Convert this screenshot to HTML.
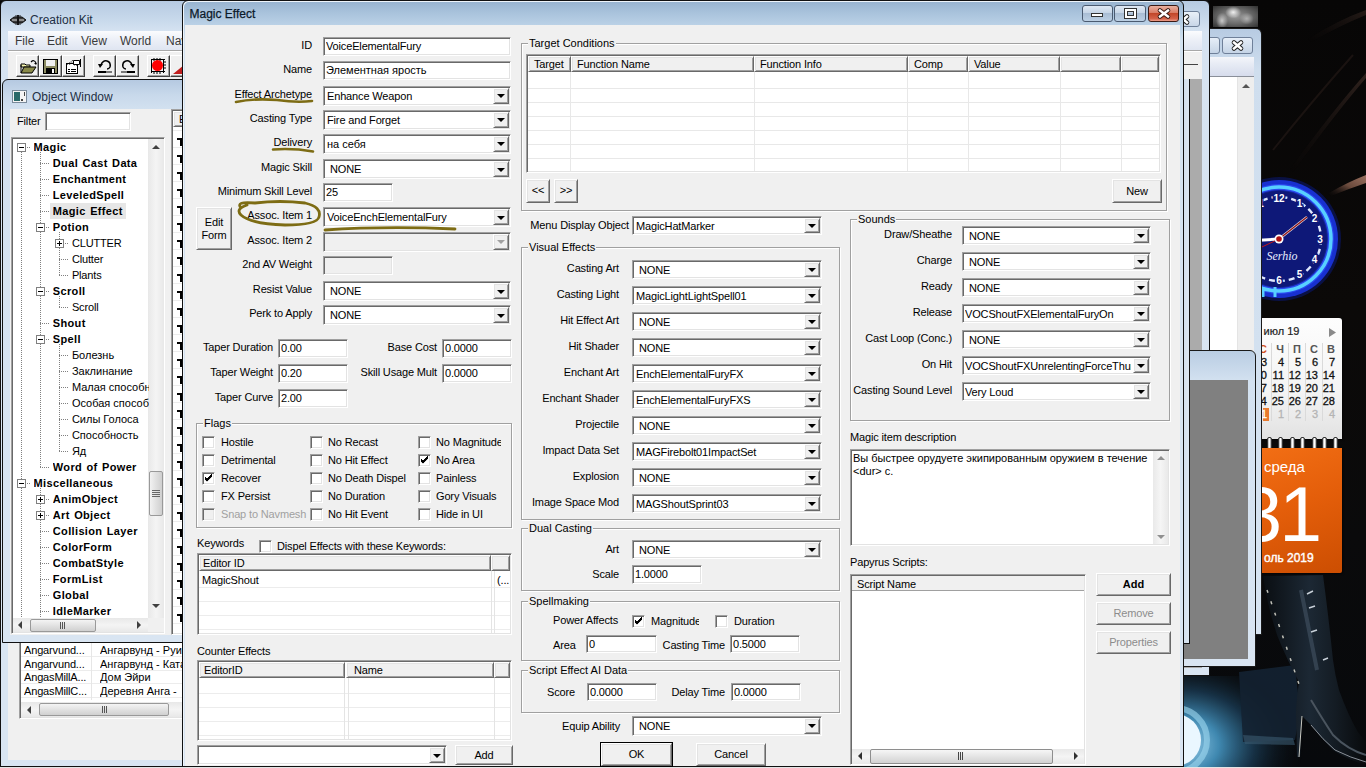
<!DOCTYPE html><html><head><meta charset="utf-8"><style>
html,body{margin:0;padding:0;}
body{width:1366px;height:768px;overflow:hidden;position:relative;background:#060606;font-family:'Liberation Sans',sans-serif;font-size:11px;color:#000;}
body div, body svg{position:absolute;}
</style></head><body>
<div style="left:1183px;top:0px;width:183px;height:768px;background:linear-gradient(180deg,#070606 0%,#0b0908 40%,#0a0a0b 70%,#07090c 100%);"></div>
<svg style="left:1183px;top:0px;filter:blur(0.7px)" width="183" height="768"><defs><radialGradient id="ice" cx="0.5" cy="0.5" r="0.5"><stop offset="0" stop-color="#f2fbff"/><stop offset="0.45" stop-color="#d8f0fb"/><stop offset="0.6" stop-color="#6ab4d8"/><stop offset="0.8" stop-color="#2a6a90" stop-opacity="0.7"/><stop offset="1" stop-color="#12324a" stop-opacity="0"/></radialGradient><linearGradient id="hair" x1="0" y1="1" x2="1" y2="0"><stop offset="0" stop-color="#1a1210" stop-opacity="0"/><stop offset="0.5" stop-color="#6a4a3c"/><stop offset="1" stop-color="#9a7060"/></linearGradient><linearGradient id="hair2" x1="0" y1="1" x2="1" y2="0"><stop offset="0" stop-color="#1a1210" stop-opacity="0"/><stop offset="1" stop-color="#3a2a24"/></linearGradient><linearGradient id="leather" x1="0" y1="0" x2="1" y2="0"><stop offset="0" stop-color="#0a0e12"/><stop offset="0.45" stop-color="#1c2834"/><stop offset="0.7" stop-color="#141c24"/><stop offset="1" stop-color="#080a0c"/></linearGradient></defs><path d="M146 193 Q165 182 183 175 L183 183 Q165 189 148 196 Z" fill="url(#hair)"/><path d="M107 169 Q150 110 183 73 L183 78 Q152 114 110 172 Z" fill="url(#hair2)" opacity="0.8"/><path d="M125 39 Q155 20 183 10 L183 15 Q156 26 128 42 Z" fill="url(#hair2)" opacity="0.6"/><path d="M90 150 Q130 100 170 55" stroke="#221815" stroke-width="2" fill="none" opacity="0.7"/><radialGradient id="haze" cx="0" cy="0.75" r="1"><stop offset="0" stop-color="#9fd4f0"/><stop offset="0.3" stop-color="#3f88b0"/><stop offset="0.6" stop-color="#1a3a52" stop-opacity="0.8"/><stop offset="1" stop-color="#0a0d10" stop-opacity="0"/></radialGradient><rect x="0" y="676" width="120" height="92" fill="url(#haze)"/><path d="M56 672 L112 665 L117 712 L112 740 L60 742 Z" fill="#142232" opacity="0.9"/><path d="M60 735 L110 738 L112 745 L62 744 Z" fill="#3a5a70" opacity="0.6"/><circle cx="-8" cy="740" r="26" fill="#eaf7ff"/><circle cx="-8" cy="740" r="32" fill="none" stroke="#9fd8f0" stroke-width="6" opacity="0.6"/><path d="M80 576 L140 575 Q146 620 150 660 Q152 675 156 690 Q165 715 175 732 L183 742 L183 765 Q165 760 150 750 Q138 738 128 725 L119 716 L117 757 L114 757 L113 712 Q114 695 116 682 Q104 660 94 635 Q84 605 80 576Z" fill="url(#leather)"/><path d="M118 590 Q126 630 134 670" stroke="#3a4858" stroke-width="4" fill="none" opacity="0.8"/><path d="M124 594 L130 591 M126 608 L132 606 M128 632 L134 630 M140 660 L145 658" stroke="#c8d0d8" stroke-width="1.5"/><path d="M84 590 L118 690" stroke="#c0c0b8" stroke-width="1.5" stroke-dasharray="3 9" fill="none"/><path d="M128 700 Q140 720 150 735 Q165 750 183 755" stroke="#4a545e" stroke-width="2" fill="none"/><path d="M119 716 L116 757" stroke="#c8c8c0" stroke-width="1" fill="none"/><path d="M128 725 Q140 740 152 750 Q168 758 183 762" stroke="#8a9098" stroke-width="1" fill="none"/></svg>
<div style="left:1213px;top:6px;width:45px;height:21px;background:radial-gradient(ellipse 8px 6px at 45% 30%,#f0f0f0,transparent),radial-gradient(ellipse 6px 8px at 20% 70%,#c8c8c8,transparent),radial-gradient(ellipse 7px 6px at 75% 60%,#b0b0b0,transparent),radial-gradient(ellipse at 50% 50%,#9a9a9a 0%,#6a6a6a 50%,#303030 100%);"></div>
<svg style="left:1215px;top:175px" width="128" height="128" viewBox="-64 -64 128 128"><circle r="62" fill="#0a1a80" opacity="0.5"/><circle r="59" fill="#1830d0"/><circle r="55" fill="#2a48f0"/><circle r="52" fill="none" stroke="#58d0ff" stroke-width="3.5"/><circle r="49" fill="#14249a"/><circle r="48" fill="#0e1878"/><circle r="42" fill="none" stroke="#dfe8ff" stroke-width="2.4" stroke-dasharray="6 4"/><g fill="#fff" stroke="#0e1878" stroke-width="3" paint-order="stroke" font-size="10" font-weight="bold" text-anchor="middle" font-family="Liberation Sans"><text x="20.5" y="-32.0">1</text><text x="35.5" y="-17.0">2</text><text x="41.0" y="3.5">3</text><text x="35.5" y="24.0">4</text><text x="20.5" y="39.0">5</text><text x="0.0" y="44.5">6</text><text x="-20.5" y="39.0">7</text><text x="-35.5" y="24.0">8</text><text x="-41.0" y="3.5">9</text><text x="-35.5" y="-17.0">10</text><text x="-20.5" y="-32.0">11</text><text x="-0.0" y="-37.5">12</text></g><text x="3" y="21" fill="#e8eeff" font-size="12" font-style="italic" font-family="Liberation Serif" text-anchor="middle">Serhio</text><line x1="0" y1="0" x2="28" y2="-22" stroke="#e0e0e8" stroke-width="2.5"/><line x1="0" y1="0" x2="28" y2="-22" stroke="#901010" stroke-width="1.2"/><line x1="0" y1="0" x2="-32" y2="2" stroke="#ffffff" stroke-width="3"/><line x1="0" y1="0" x2="-30" y2="14" stroke="#c01818" stroke-width="1"/><circle r="4.5" fill="#fff"/><circle r="2.8" fill="#b01010"/><path d="M-16 48 V58 M-4 48 V58" stroke="#58d0ff" stroke-width="3"/></svg>
<div style="left:1262px;top:318px;width:80px;height:121px;background:linear-gradient(180deg,#fdfdfd 0%,#f4f4f4 60%,#e2e2e2 100%);border-radius:0 3px 0 0;box-shadow:1px 1px 2px rgba(0,0,0,.6);"></div>
<div style="top:325px;font-size:11px;line-height:13px;color:#222;white-space:nowrap;left:1263.5px;-webkit-text-stroke:0.2px #222;">июл 19</div>
<svg style="left:1329px;top:328px" width="7" height="9"><path d="M0 0 L7 4.5 L0 9Z" fill="#8a8a8a"/></svg>
<div style="left:1263px;top:408px;width:6px;height:13px;background:#e87a30;"></div>
<div style="left:1271px;top:343px;width:1px;height:78px;background:#dadada;"></div>
<div style="left:1288px;top:343px;width:1px;height:78px;background:#dadada;"></div>
<div style="left:1305px;top:343px;width:1px;height:78px;background:#dadada;"></div>
<div style="left:1322px;top:343px;width:1px;height:78px;background:#dadada;"></div>
<div style="left:1237px;top:343px;width:30px;text-align:right;font-size:11px;line-height:13px;color:#d05020;font-weight:bold;-webkit-text-stroke:0;white-space:nowrap;">С</div>
<div style="left:1254px;top:343px;width:30px;text-align:right;font-size:11px;line-height:13px;color:#555;font-weight:bold;-webkit-text-stroke:0;white-space:nowrap;">Ч</div>
<div style="left:1271px;top:343px;width:30px;text-align:right;font-size:11px;line-height:13px;color:#555;font-weight:bold;-webkit-text-stroke:0;white-space:nowrap;">П</div>
<div style="left:1288px;top:343px;width:30px;text-align:right;font-size:11px;line-height:13px;color:#555;font-weight:bold;-webkit-text-stroke:0;white-space:nowrap;">С</div>
<div style="left:1305px;top:343px;width:30px;text-align:right;font-size:11px;line-height:13px;color:#555;font-weight:bold;-webkit-text-stroke:0;white-space:nowrap;">В</div>
<div style="left:1237px;top:356px;width:30px;text-align:right;font-size:11px;line-height:13px;color:#111;font-weight:normal;-webkit-text-stroke:0.3px #111;white-space:nowrap;">3</div>
<div style="left:1254px;top:356px;width:30px;text-align:right;font-size:11px;line-height:13px;color:#111;font-weight:normal;-webkit-text-stroke:0.3px #111;white-space:nowrap;">4</div>
<div style="left:1271px;top:356px;width:30px;text-align:right;font-size:11px;line-height:13px;color:#111;font-weight:normal;-webkit-text-stroke:0.3px #111;white-space:nowrap;">5</div>
<div style="left:1288px;top:356px;width:30px;text-align:right;font-size:11px;line-height:13px;color:#111;font-weight:normal;-webkit-text-stroke:0.3px #111;white-space:nowrap;">6</div>
<div style="left:1305px;top:356px;width:30px;text-align:right;font-size:11px;line-height:13px;color:#111;font-weight:normal;-webkit-text-stroke:0.3px #111;white-space:nowrap;">7</div>
<div style="left:1237px;top:369px;width:30px;text-align:right;font-size:11px;line-height:13px;color:#111;font-weight:normal;-webkit-text-stroke:0.3px #111;white-space:nowrap;">10</div>
<div style="left:1254px;top:369px;width:30px;text-align:right;font-size:11px;line-height:13px;color:#111;font-weight:normal;-webkit-text-stroke:0.3px #111;white-space:nowrap;">11</div>
<div style="left:1271px;top:369px;width:30px;text-align:right;font-size:11px;line-height:13px;color:#111;font-weight:normal;-webkit-text-stroke:0.3px #111;white-space:nowrap;">12</div>
<div style="left:1288px;top:369px;width:30px;text-align:right;font-size:11px;line-height:13px;color:#111;font-weight:normal;-webkit-text-stroke:0.3px #111;white-space:nowrap;">13</div>
<div style="left:1305px;top:369px;width:30px;text-align:right;font-size:11px;line-height:13px;color:#111;font-weight:normal;-webkit-text-stroke:0.3px #111;white-space:nowrap;">14</div>
<div style="left:1237px;top:382px;width:30px;text-align:right;font-size:11px;line-height:13px;color:#111;font-weight:normal;-webkit-text-stroke:0.3px #111;white-space:nowrap;">17</div>
<div style="left:1254px;top:382px;width:30px;text-align:right;font-size:11px;line-height:13px;color:#111;font-weight:normal;-webkit-text-stroke:0.3px #111;white-space:nowrap;">18</div>
<div style="left:1271px;top:382px;width:30px;text-align:right;font-size:11px;line-height:13px;color:#111;font-weight:normal;-webkit-text-stroke:0.3px #111;white-space:nowrap;">19</div>
<div style="left:1288px;top:382px;width:30px;text-align:right;font-size:11px;line-height:13px;color:#111;font-weight:normal;-webkit-text-stroke:0.3px #111;white-space:nowrap;">20</div>
<div style="left:1305px;top:382px;width:30px;text-align:right;font-size:11px;line-height:13px;color:#111;font-weight:normal;-webkit-text-stroke:0.3px #111;white-space:nowrap;">21</div>
<div style="left:1237px;top:395px;width:30px;text-align:right;font-size:11px;line-height:13px;color:#111;font-weight:normal;-webkit-text-stroke:0.3px #111;white-space:nowrap;">24</div>
<div style="left:1254px;top:395px;width:30px;text-align:right;font-size:11px;line-height:13px;color:#111;font-weight:normal;-webkit-text-stroke:0.3px #111;white-space:nowrap;">25</div>
<div style="left:1271px;top:395px;width:30px;text-align:right;font-size:11px;line-height:13px;color:#111;font-weight:normal;-webkit-text-stroke:0.3px #111;white-space:nowrap;">26</div>
<div style="left:1288px;top:395px;width:30px;text-align:right;font-size:11px;line-height:13px;color:#111;font-weight:normal;-webkit-text-stroke:0.3px #111;white-space:nowrap;">27</div>
<div style="left:1305px;top:395px;width:30px;text-align:right;font-size:11px;line-height:13px;color:#111;font-weight:normal;-webkit-text-stroke:0.3px #111;white-space:nowrap;">28</div>
<div style="left:1237px;top:408px;width:30px;text-align:right;font-size:11px;line-height:13px;color:#fff;font-weight:normal;-webkit-text-stroke:0.3px #fff;white-space:nowrap;">1</div>
<div style="left:1254px;top:408px;width:30px;text-align:right;font-size:11px;line-height:13px;color:#b4b4b4;font-weight:normal;-webkit-text-stroke:0.3px #b4b4b4;white-space:nowrap;">1</div>
<div style="left:1271px;top:408px;width:30px;text-align:right;font-size:11px;line-height:13px;color:#b4b4b4;font-weight:normal;-webkit-text-stroke:0.3px #b4b4b4;white-space:nowrap;">2</div>
<div style="left:1288px;top:408px;width:30px;text-align:right;font-size:11px;line-height:13px;color:#b4b4b4;font-weight:normal;-webkit-text-stroke:0.3px #b4b4b4;white-space:nowrap;">3</div>
<div style="left:1305px;top:408px;width:30px;text-align:right;font-size:11px;line-height:13px;color:#b4b4b4;font-weight:normal;-webkit-text-stroke:0.3px #b4b4b4;white-space:nowrap;">4</div>
<div style="left:1262px;top:340px;width:9px;height:81px;background:linear-gradient(90deg,rgba(0,0,0,0),rgba(0,0,0,0));"></div>
<div style="left:1267px;top:437px;width:5px;height:16px;border:1px solid #333;border-radius:2px;background:linear-gradient(90deg,#aaa,#fff 50%,#999);box-sizing:border-box;"></div>
<div style="left:1278px;top:437px;width:5px;height:16px;border:1px solid #333;border-radius:2px;background:linear-gradient(90deg,#aaa,#fff 50%,#999);box-sizing:border-box;"></div>
<div style="left:1290px;top:437px;width:5px;height:16px;border:1px solid #333;border-radius:2px;background:linear-gradient(90deg,#aaa,#fff 50%,#999);box-sizing:border-box;"></div>
<div style="left:1300px;top:437px;width:5px;height:16px;border:1px solid #333;border-radius:2px;background:linear-gradient(90deg,#aaa,#fff 50%,#999);box-sizing:border-box;"></div>
<div style="left:1312px;top:437px;width:5px;height:16px;border:1px solid #333;border-radius:2px;background:linear-gradient(90deg,#aaa,#fff 50%,#999);box-sizing:border-box;"></div>
<div style="left:1322px;top:437px;width:5px;height:16px;border:1px solid #333;border-radius:2px;background:linear-gradient(90deg,#aaa,#fff 50%,#999);box-sizing:border-box;"></div>
<div style="left:1333px;top:437px;width:5px;height:16px;border:1px solid #333;border-radius:2px;background:linear-gradient(90deg,#aaa,#fff 50%,#999);box-sizing:border-box;"></div>
<div style="left:1262px;top:448px;width:80px;height:125px;background:linear-gradient(160deg,#f26e14 0%,#e45e0a 45%,#cc4e02 100%);box-shadow:1px 1px 2px rgba(0,0,0,.6);border-radius:0 0 2px 0;"></div>
<div style="top:458px;font-size:15px;line-height:17px;color:#fff;white-space:nowrap;left:1264px;">среда</div>
<div style="left:1219px;top:474px;width:100px;text-align:right;font-size:77px;line-height:80px;color:#fff;letter-spacing:-3px;white-space:nowrap;">31</div>
<div style="top:551px;font-size:12px;line-height:14px;color:#fff;white-space:nowrap;left:1264px;-webkit-text-stroke:0.4px #fff;">оль 2019</div>
<div style="left:1210px;top:28px;width:52px;height:607px;background:linear-gradient(180deg,#b7cbe2 0%,#cfdeee 40px,#d7e4f2 100%);border:1px solid #1a1a1a;border-left:none;border-radius:0 6px 0 0;box-sizing:border-box;"></div>
<div style="left:1222px;top:37px;width:31px;height:17px;border:1px solid #6f8099;border-radius:3px;background:linear-gradient(180deg,#e6eef8,#c5d4e6);box-sizing:border-box;"></div>
<div style="left:1195px;top:37px;width:25px;height:17px;border:1px solid #6f8099;border-radius:3px;background:linear-gradient(180deg,#e6eef8,#c5d4e6);box-sizing:border-box;"></div>
<svg style="left:1230px;top:39px" width="15" height="13"><path d="M4 3.5 L11 9.5 M11 3.5 L4 9.5" stroke="#222" stroke-width="4.6" stroke-linecap="round"/><path d="M4 3.5 L11 9.5 M11 3.5 L4 9.5" stroke="#fff" stroke-width="2.4" stroke-linecap="square"/></svg>
<div style="left:1210px;top:57px;width:44px;height:19px;background:linear-gradient(180deg,#f4f6fa 0%,#e8ecf5 35%,#d6dcec 100%);"></div>
<div style="left:1210px;top:76px;width:44px;height:1px;background:#8a8f99;"></div>
<div style="left:1210px;top:77px;width:44px;height:551px;background:#fff;"></div>
<div style="left:1237px;top:77px;width:17px;height:551px;background:#eeeeee;border-left:1px solid #e4e4e4;box-sizing:border-box;"></div>
<div style="left:1242px;top:84px;width:0;height:0;border-left:4px solid transparent;border-right:4px solid transparent;border-bottom:4px solid #555;"></div>
<div style="left:0px;top:0px;width:1210px;height:676px;background:linear-gradient(180deg,#b6cae2 0%,#c9daec 20px,#d6e3f1 31px,#d9e5f2 100%);border:1px solid #111;border-radius:6px 6px 0 0;box-sizing:border-box;"></div>
<div style="left:0px;top:0px;width:1210px;height:1px;background:#111;"></div>
<svg style="left:9px;top:14px" width="18" height="12"><path d="M1 6 L5 3 L13 3 L17 6 L13 9 L5 9 Z" fill="#3a3a3a" stroke="#111" stroke-width="1"/><path d="M3 6 H15" stroke="#ddd" stroke-width="1"/><path d="M9 1 V11" stroke="#111" stroke-width="2"/><path d="M6 2 H12 M6 10 H12" stroke="#222" stroke-width="1"/></svg>
<div style="top:13px;font-size:12px;line-height:14px;color:#1e2f44;white-space:nowrap;left:30px;">Creation Kit</div>
<div style="left:1168px;top:11px;width:32px;height:16px;border:1px solid #6f8099;border-radius:3px;background:linear-gradient(180deg,#e9f0f8,#c8d6e8);box-sizing:border-box;"></div>
<svg style="left:1176px;top:13px" width="15" height="13"><path d="M4 3.5 L11 9.5 M11 3.5 L4 9.5" stroke="#222" stroke-width="4.6" stroke-linecap="round"/><path d="M4 3.5 L11 9.5 M11 3.5 L4 9.5" stroke="#fff" stroke-width="2.4" stroke-linecap="square"/></svg>
<div style="left:8px;top:31px;width:1194px;height:19px;background:linear-gradient(180deg,#fbfcfe 0%,#eef1f8 40%,#dfe5f1 100%);"></div>
<div style="top:34px;font-size:12px;line-height:14px;color:#3a3a3a;white-space:nowrap;left:15px;">File</div>
<div style="top:34px;font-size:12px;line-height:14px;color:#3a3a3a;white-space:nowrap;left:47px;">Edit</div>
<div style="top:34px;font-size:12px;line-height:14px;color:#3a3a3a;white-space:nowrap;left:81px;">View</div>
<div style="top:34px;font-size:12px;line-height:14px;color:#3a3a3a;white-space:nowrap;left:120px;">World</div>
<div style="top:34px;font-size:12px;line-height:14px;color:#3a3a3a;white-space:nowrap;left:166px;">Navmesh</div>
<div style="left:8px;top:50px;width:1194px;height:1px;background:#a8a8a8;"></div>
<div style="left:8px;top:51px;width:1194px;height:28px;background:#f0f0f0;border-top:1px solid #fff;box-sizing:border-box;"></div>
<div style="left:1184px;top:64px;width:14px;height:1px;background:#444;"></div>
<div style="left:16px;top:55px;width:23px;height:22px;background:#f0f0f0;border:1px solid;border-color:#fff #404040 #404040 #fff;box-shadow:inset -1px -1px 0 #a0a0a0;box-sizing:border-box;"></div>
<div style="left:39px;top:55px;width:23px;height:22px;background:#f0f0f0;border:1px solid;border-color:#fff #404040 #404040 #fff;box-shadow:inset -1px -1px 0 #a0a0a0;box-sizing:border-box;"></div>
<div style="left:62px;top:55px;width:23px;height:22px;background:#f0f0f0;border:1px solid;border-color:#fff #404040 #404040 #fff;box-shadow:inset -1px -1px 0 #a0a0a0;box-sizing:border-box;"></div>
<div style="left:93px;top:55px;width:23px;height:22px;background:#f0f0f0;border:1px solid;border-color:#fff #404040 #404040 #fff;box-shadow:inset -1px -1px 0 #a0a0a0;box-sizing:border-box;"></div>
<div style="left:116px;top:55px;width:23px;height:22px;background:#f0f0f0;border:1px solid;border-color:#fff #404040 #404040 #fff;box-shadow:inset -1px -1px 0 #a0a0a0;box-sizing:border-box;"></div>
<div style="left:147px;top:55px;width:23px;height:22px;background:#f0f0f0;border:1px solid;border-color:#fff #404040 #404040 #fff;box-shadow:inset -1px -1px 0 #a0a0a0;box-sizing:border-box;"></div>
<div style="left:170px;top:55px;width:23px;height:22px;background:#f0f0f0;border:1px solid;border-color:#fff #404040 #404040 #fff;box-shadow:inset -1px -1px 0 #a0a0a0;box-sizing:border-box;"></div>
<svg style="left:20px;top:59px" width="18" height="16"><path d="M11 3 Q14 0 16 4" stroke="#000" stroke-width="1.2" fill="none"/><path d="M14 4 L17 4 L16 6Z" fill="#000"/><path d="M1 5 H5 L6 6 H10 V8 H1 Z" fill="#f8f8b0" stroke="#000" stroke-width="1"/><path d="M1 14 L4 8 H16 L12 14 Z" fill="#8a8a4a" stroke="#000" stroke-width="1"/><path d="M1 6 V14" stroke="#000"/></svg>
<svg style="left:43px;top:59px" width="16" height="16"><rect x="0.5" y="0.5" width="14" height="14" fill="#8a8a60" stroke="#000"/><rect x="3" y="1" width="9" height="6" fill="#f0f0f0"/><rect x="3" y="9" width="9" height="6" fill="#000"/><rect x="9" y="10" width="2" height="4" fill="#fff"/></svg>
<svg style="left:65px;top:59px" width="17" height="16"><rect x="1.5" y="4.5" width="11" height="10" fill="#fff" stroke="#000"/><path d="M3 10.5 H5 M6 10.5 H11 M3 12.5 H5 M6 12.5 H11" stroke="#000" stroke-width="1"/><path d="M2.5 5.5 L7.5 1.5 L11.5 6.5" stroke="#000" stroke-width="1" stroke-dasharray="1 1" fill="none"/><path d="M4.5 5.5 L7.5 3.5 L9.5 6.5" stroke="#000" stroke-width="1" stroke-dasharray="1 1" fill="none"/><path d="M8.5 1.5 H14.5 V5.5 H8.5 Z" fill="#fff" stroke="#000"/><path d="M15.5 0 V8" stroke="#000"/></svg>
<svg style="left:97px;top:59px" width="16" height="16"><path d="M4 6 Q6 1 10 2 Q14 3 13 8 Q12 10 10 10" stroke="#000" stroke-width="1.5" fill="none"/><path d="M1 5 L6 5 L3 9 Z" fill="#000"/><rect x="1" y="12" width="8" height="2" fill="#000"/><path d="M10 12 V14 M12 12 V14 M14 12 V14" stroke="#000"/></svg>
<svg style="left:120px;top:59px" width="16" height="16"><path d="M12 6 Q10 1 6 2 Q2 3 3 8 Q4 10 6 10" stroke="#000" stroke-width="1.5" fill="none"/><path d="M15 5 L10 5 L13 9 Z" fill="#000"/><rect x="7" y="12" width="8" height="2" fill="#000"/><path d="M2 12 V14 M4 12 V14 M6 12 V14" stroke="#000"/></svg>
<svg style="left:150px;top:58px" width="16" height="16"><path d="M1.5 1 V15 M13.5 1 V15 M1 1.5 H15 M1 13.5 H15" stroke="#000" stroke-width="1"/><path d="M4 0 V3 M7 0 V3 M10 0 V3 M4 13 V16 M7 13 V16 M10 13 V16 M13 4 H16 M13 7 H16 M13 10 H16" stroke="#000"/><circle cx="7.5" cy="7.5" r="5.5" fill="#f00"/></svg>
<svg style="left:173px;top:62px" width="12" height="12"><path d="M0 12 L11 3 L11 12 Z" fill="#c02020"/></svg>
<div style="left:8px;top:79px;width:1194px;height:589px;background:#ababab;"></div>
<div style="left:1183px;top:350px;width:73px;height:317px;background:linear-gradient(180deg,#b9cde3 0%,#d3e1f0 30px,#d9e5f2 100%);border:1px solid #1a1a1a;border-radius:0 6px 0 0;box-sizing:border-box;"></div>
<div style="left:1183px;top:380px;width:65px;height:279px;background:#808080;"></div>
<div style="left:0px;top:643px;width:200px;height:124px;background:#d9e5f2;border-left:1px solid #111;box-sizing:border-box;"></div>
<div style="left:8px;top:643px;width:192px;height:117px;background:#f0f0f0;"></div>
<div style="left:19px;top:630px;width:181px;height:89px;background:#fff;border:1px solid;border-color:#a0a0a0 #fff #fff #a0a0a0;box-shadow:inset 1px 1px 0 #696969,inset -1px -1px 0 #e3e3e3;box-sizing:border-box;"></div>
<div style="top:644px;font-size:11px;line-height:13px;color:#000;white-space:nowrap;letter-spacing:-0.15px;left:24px;width:66px;overflow:hidden;">Angarvund...</div>
<div style="top:644px;font-size:11px;line-height:13px;color:#000;white-space:nowrap;left:100px;width:100px;overflow:hidden;">Ангарвунд - Руины</div>
<div style="left:21px;top:656px;width:179px;height:1px;background:#ececec;"></div>
<div style="top:658px;font-size:11px;line-height:13px;color:#000;white-space:nowrap;letter-spacing:-0.15px;left:24px;width:66px;overflow:hidden;">Angarvund...</div>
<div style="top:658px;font-size:11px;line-height:13px;color:#000;white-space:nowrap;left:100px;width:100px;overflow:hidden;">Ангарвунд - Катакомбы</div>
<div style="left:21px;top:670px;width:179px;height:1px;background:#ececec;"></div>
<div style="top:671px;font-size:11px;line-height:13px;color:#000;white-space:nowrap;letter-spacing:-0.15px;left:24px;width:66px;overflow:hidden;">AngasMillA...</div>
<div style="top:671px;font-size:11px;line-height:13px;color:#000;white-space:nowrap;left:100px;width:100px;overflow:hidden;">Дом Эйри</div>
<div style="left:21px;top:683px;width:179px;height:1px;background:#ececec;"></div>
<div style="top:685px;font-size:11px;line-height:13px;color:#000;white-space:nowrap;letter-spacing:-0.15px;left:24px;width:66px;overflow:hidden;">AngasMillC...</div>
<div style="top:685px;font-size:11px;line-height:13px;color:#000;white-space:nowrap;left:100px;width:100px;overflow:hidden;">Деревня Анга - </div>
<div style="left:21px;top:697px;width:179px;height:1px;background:#ececec;"></div>
<div style="left:91px;top:636px;width:1px;height:64px;background:#e6e6e6;"></div>
<div style="left:21px;top:700px;width:179px;height:2px;background:#fff;"></div>
<div style="left:21px;top:702px;width:179px;height:15px;background:linear-gradient(180deg,#e8e8e8,#f4f4f4 50%,#e8e8e8);"></div>
<div style="left:27px;top:706px;width:0;height:0;border-top:4px solid transparent;border-bottom:4px solid transparent;border-right:4px solid #404040;"></div>
<div style="left:39px;top:703px;width:130px;height:13px;background:linear-gradient(180deg,#f4f4f4,#e2e2e2 50%,#d0d0d0);border:1px solid #999;border-radius:2px;box-sizing:border-box;"></div>
<div style="left:102px;top:706px;width:1px;height:7px;background:#555;"></div>
<div style="left:104px;top:706px;width:1px;height:7px;background:#555;"></div>
<div style="left:106px;top:706px;width:1px;height:7px;background:#555;"></div>
<div style="left:1183px;top:79px;width:7px;height:565px;background:linear-gradient(90deg,#d2e0ef,#dbe6f2);border-right:1px solid #111;border-bottom:1px solid #111;box-sizing:border-box;"></div>
<div style="left:2px;top:79px;width:198px;height:564px;background:linear-gradient(180deg,#b5c9e1 0%,#c8d9eb 15px,#d3e1f0 30px,#d9e5f2 100%);border:1px solid #111;border-radius:6px 6px 0 0;box-sizing:border-box;"></div>
<svg style="left:12px;top:90px" width="15" height="13"><rect x="0.5" y="0.5" width="14" height="12" fill="#f4f4f4" stroke="#7a8a9a"/><rect x="2" y="2" width="6" height="9" fill="#2a6a6a"/><rect x="9" y="9" width="2" height="2" fill="#444"/><rect x="12" y="2" width="1" height="4" fill="#444"/></svg>
<div style="top:90px;font-size:12px;line-height:14px;color:#1e2f44;white-space:nowrap;left:32px;">Object Window</div>
<div style="left:10px;top:109px;width:190px;height:526px;background:#f0f0f0;"></div>
<div style="top:115px;font-size:11px;line-height:13px;color:#000;white-space:nowrap;letter-spacing:-0.15px;left:17px;">Filter</div>
<div style="left:45px;top:112px;width:86px;height:19px;background:#fff;border:1px solid;border-color:#a0a0a0 #fff #fff #a0a0a0;box-shadow:inset 1px 1px 0 #696969,inset -1px -1px 0 #e3e3e3;box-sizing:border-box;"></div>
<div style="left:11px;top:137px;width:154px;height:497px;background:#fff;border:1px solid;border-color:#a0a0a0 #fff #fff #a0a0a0;box-shadow:inset 1px 1px 0 #696969,inset -1px -1px 0 #e3e3e3;box-sizing:border-box;"></div>
<div style="left:148px;top:139px;width:16px;height:479px;background:linear-gradient(90deg,#e8e8e8,#f4f4f4 50%,#e8e8e8);"></div>
<div style="left:152px;top:145px;width:0;height:0;border-left:4px solid transparent;border-right:4px solid transparent;border-bottom:4px solid #404040;"></div>
<div style="left:152px;top:604px;width:0;height:0;border-left:4px solid transparent;border-right:4px solid transparent;border-top:4px solid #404040;"></div>
<div style="left:149px;top:471px;width:14px;height:45px;background:linear-gradient(90deg,#f2f2f2,#e0e0e0 50%,#cfcfcf);border:1px solid #999;border-radius:2px;box-sizing:border-box;"></div>
<div style="left:152px;top:490px;width:8px;height:1px;background:#666;"></div>
<div style="left:152px;top:492px;width:8px;height:1px;background:#666;"></div>
<div style="left:152px;top:494px;width:8px;height:1px;background:#666;"></div>
<div style="left:152px;top:496px;width:8px;height:1px;background:#666;"></div>
<div style="left:13px;top:618px;width:135px;height:14px;background:linear-gradient(180deg,#e8e8e8,#f4f4f4 50%,#e8e8e8);"></div>
<div style="left:18px;top:621px;width:0;height:0;border-top:4px solid transparent;border-bottom:4px solid transparent;border-right:4px solid #404040;"></div>
<div style="left:137px;top:621px;width:0;height:0;border-top:4px solid transparent;border-bottom:4px solid transparent;border-left:4px solid #404040;"></div>
<div style="left:30px;top:619px;width:66px;height:13px;background:linear-gradient(180deg,#f4f4f4,#e2e2e2 50%,#d0d0d0);border:1px solid #999;border-radius:2px;box-sizing:border-box;"></div>
<div style="left:60px;top:622px;width:1px;height:7px;background:#555;"></div>
<div style="left:62px;top:622px;width:1px;height:7px;background:#555;"></div>
<div style="left:64px;top:622px;width:1px;height:7px;background:#555;"></div>
<div style="left:148px;top:618px;width:16px;height:14px;background:#f0f0f0;"></div>
<div style="left:21px;top:152px;width:1px;height:466px;background:repeating-linear-gradient(180deg,#808080 0 1px,transparent 1px 2px);"></div>
<div style="left:40px;top:152px;width:1px;height:315px;background:repeating-linear-gradient(180deg,#808080 0 1px,transparent 1px 2px);"></div>
<div style="left:40px;top:488px;width:1px;height:130px;background:repeating-linear-gradient(180deg,#808080 0 1px,transparent 1px 2px);"></div>
<div style="left:59px;top:232px;width:1px;height:43px;background:repeating-linear-gradient(180deg,#808080 0 1px,transparent 1px 2px);"></div>
<div style="left:59px;top:296px;width:1px;height:11px;background:repeating-linear-gradient(180deg,#808080 0 1px,transparent 1px 2px);"></div>
<div style="left:59px;top:344px;width:1px;height:107px;background:repeating-linear-gradient(180deg,#808080 0 1px,transparent 1px 2px);"></div>
<div style="left:13px;top:139px;width:135px;height:479px;overflow:hidden;"></div>
<div style="left:17px;top:143px;width:9px;height:9px;background:#fff;border:1px solid #808080;box-sizing:border-box;"></div>
<div style="left:19px;top:147px;width:5px;height:1px;background:#000;"></div>
<div style="left:27px;top:147px;width:4px;height:1px;background:repeating-linear-gradient(90deg,#808080 0 1px,transparent 1px 2px);"></div>
<div style="top:141px;font-size:11px;line-height:13px;color:#000;white-space:nowrap;font-weight:bold;letter-spacing:0.35px;left:33.6px;width:115px;overflow:hidden;word-spacing:1px;">Magic</div>
<div style="left:40px;top:163px;width:10px;height:1px;background:repeating-linear-gradient(90deg,#808080 0 1px,transparent 1px 2px);"></div>
<div style="top:157px;font-size:11px;line-height:13px;color:#000;white-space:nowrap;font-weight:bold;letter-spacing:0.35px;left:52.8px;width:96px;overflow:hidden;word-spacing:1px;">Dual Cast Data</div>
<div style="left:40px;top:179px;width:10px;height:1px;background:repeating-linear-gradient(90deg,#808080 0 1px,transparent 1px 2px);"></div>
<div style="top:173px;font-size:11px;line-height:13px;color:#000;white-space:nowrap;font-weight:bold;letter-spacing:0.35px;left:52.8px;width:96px;overflow:hidden;word-spacing:1px;">Enchantment</div>
<div style="left:40px;top:195px;width:10px;height:1px;background:repeating-linear-gradient(90deg,#808080 0 1px,transparent 1px 2px);"></div>
<div style="top:189px;font-size:11px;line-height:13px;color:#000;white-space:nowrap;font-weight:bold;letter-spacing:0.35px;left:52.8px;width:96px;overflow:hidden;word-spacing:1px;">LeveledSpell</div>
<div style="left:40px;top:211px;width:10px;height:1px;background:repeating-linear-gradient(90deg,#808080 0 1px,transparent 1px 2px);"></div>
<div style="left:50px;top:203px;width:76px;height:16px;background:#e6e6e6;"></div>
<div style="top:205px;font-size:11px;line-height:13px;color:#000;white-space:nowrap;font-weight:bold;letter-spacing:0.35px;left:52.8px;width:96px;overflow:hidden;word-spacing:1px;">Magic Effect</div>
<div style="left:36px;top:223px;width:9px;height:9px;background:#fff;border:1px solid #808080;box-sizing:border-box;"></div>
<div style="left:38px;top:227px;width:5px;height:1px;background:#000;"></div>
<div style="left:46px;top:227px;width:4px;height:1px;background:repeating-linear-gradient(90deg,#808080 0 1px,transparent 1px 2px);"></div>
<div style="top:221px;font-size:11px;line-height:13px;color:#000;white-space:nowrap;font-weight:bold;letter-spacing:0.35px;left:52.8px;width:96px;overflow:hidden;word-spacing:1px;">Potion</div>
<div style="left:55px;top:239px;width:9px;height:9px;background:#fff;border:1px solid #808080;box-sizing:border-box;"></div>
<div style="left:57px;top:243px;width:5px;height:1px;background:#000;"></div>
<div style="left:59px;top:241px;width:1px;height:5px;background:#000;"></div>
<div style="left:65px;top:243px;width:4px;height:1px;background:repeating-linear-gradient(90deg,#808080 0 1px,transparent 1px 2px);"></div>
<div style="top:237px;font-size:11px;line-height:13px;color:#000;white-space:nowrap;letter-spacing:-0.15px;left:71.9px;width:77px;overflow:hidden;">CLUTTER</div>
<div style="left:59px;top:259px;width:10px;height:1px;background:repeating-linear-gradient(90deg,#808080 0 1px,transparent 1px 2px);"></div>
<div style="top:253px;font-size:11px;line-height:13px;color:#000;white-space:nowrap;letter-spacing:-0.15px;left:71.9px;width:77px;overflow:hidden;">Clutter</div>
<div style="left:59px;top:275px;width:10px;height:1px;background:repeating-linear-gradient(90deg,#808080 0 1px,transparent 1px 2px);"></div>
<div style="top:269px;font-size:11px;line-height:13px;color:#000;white-space:nowrap;letter-spacing:-0.15px;left:71.9px;width:77px;overflow:hidden;">Plants</div>
<div style="left:36px;top:287px;width:9px;height:9px;background:#fff;border:1px solid #808080;box-sizing:border-box;"></div>
<div style="left:38px;top:291px;width:5px;height:1px;background:#000;"></div>
<div style="left:46px;top:291px;width:4px;height:1px;background:repeating-linear-gradient(90deg,#808080 0 1px,transparent 1px 2px);"></div>
<div style="top:285px;font-size:11px;line-height:13px;color:#000;white-space:nowrap;font-weight:bold;letter-spacing:0.35px;left:52.8px;width:96px;overflow:hidden;word-spacing:1px;">Scroll</div>
<div style="left:59px;top:307px;width:10px;height:1px;background:repeating-linear-gradient(90deg,#808080 0 1px,transparent 1px 2px);"></div>
<div style="top:301px;font-size:11px;line-height:13px;color:#000;white-space:nowrap;letter-spacing:-0.15px;left:71.9px;width:77px;overflow:hidden;">Scroll</div>
<div style="left:40px;top:323px;width:10px;height:1px;background:repeating-linear-gradient(90deg,#808080 0 1px,transparent 1px 2px);"></div>
<div style="top:317px;font-size:11px;line-height:13px;color:#000;white-space:nowrap;font-weight:bold;letter-spacing:0.35px;left:52.8px;width:96px;overflow:hidden;word-spacing:1px;">Shout</div>
<div style="left:36px;top:335px;width:9px;height:9px;background:#fff;border:1px solid #808080;box-sizing:border-box;"></div>
<div style="left:38px;top:339px;width:5px;height:1px;background:#000;"></div>
<div style="left:46px;top:339px;width:4px;height:1px;background:repeating-linear-gradient(90deg,#808080 0 1px,transparent 1px 2px);"></div>
<div style="top:333px;font-size:11px;line-height:13px;color:#000;white-space:nowrap;font-weight:bold;letter-spacing:0.35px;left:52.8px;width:96px;overflow:hidden;word-spacing:1px;">Spell</div>
<div style="left:59px;top:355px;width:10px;height:1px;background:repeating-linear-gradient(90deg,#808080 0 1px,transparent 1px 2px);"></div>
<div style="top:349px;font-size:11px;line-height:13px;color:#000;white-space:nowrap;left:71.9px;width:77px;overflow:hidden;">Болезнь</div>
<div style="left:59px;top:371px;width:10px;height:1px;background:repeating-linear-gradient(90deg,#808080 0 1px,transparent 1px 2px);"></div>
<div style="top:365px;font-size:11px;line-height:13px;color:#000;white-space:nowrap;left:71.9px;width:77px;overflow:hidden;">Заклинание</div>
<div style="left:59px;top:387px;width:10px;height:1px;background:repeating-linear-gradient(90deg,#808080 0 1px,transparent 1px 2px);"></div>
<div style="top:381px;font-size:11px;line-height:13px;color:#000;white-space:nowrap;left:71.9px;width:77px;overflow:hidden;">Малая способность</div>
<div style="left:59px;top:403px;width:10px;height:1px;background:repeating-linear-gradient(90deg,#808080 0 1px,transparent 1px 2px);"></div>
<div style="top:397px;font-size:11px;line-height:13px;color:#000;white-space:nowrap;left:71.9px;width:77px;overflow:hidden;">Особая способность</div>
<div style="left:59px;top:419px;width:10px;height:1px;background:repeating-linear-gradient(90deg,#808080 0 1px,transparent 1px 2px);"></div>
<div style="top:413px;font-size:11px;line-height:13px;color:#000;white-space:nowrap;left:71.9px;width:77px;overflow:hidden;">Силы Голоса</div>
<div style="left:59px;top:435px;width:10px;height:1px;background:repeating-linear-gradient(90deg,#808080 0 1px,transparent 1px 2px);"></div>
<div style="top:429px;font-size:11px;line-height:13px;color:#000;white-space:nowrap;left:71.9px;width:77px;overflow:hidden;">Способность</div>
<div style="left:59px;top:451px;width:10px;height:1px;background:repeating-linear-gradient(90deg,#808080 0 1px,transparent 1px 2px);"></div>
<div style="top:445px;font-size:11px;line-height:13px;color:#000;white-space:nowrap;left:71.9px;width:77px;overflow:hidden;">Яд</div>
<div style="left:40px;top:467px;width:10px;height:1px;background:repeating-linear-gradient(90deg,#808080 0 1px,transparent 1px 2px);"></div>
<div style="top:461px;font-size:11px;line-height:13px;color:#000;white-space:nowrap;font-weight:bold;letter-spacing:0.35px;left:52.8px;width:96px;overflow:hidden;word-spacing:1px;">Word of Power</div>
<div style="left:17px;top:479px;width:9px;height:9px;background:#fff;border:1px solid #808080;box-sizing:border-box;"></div>
<div style="left:19px;top:483px;width:5px;height:1px;background:#000;"></div>
<div style="left:27px;top:483px;width:4px;height:1px;background:repeating-linear-gradient(90deg,#808080 0 1px,transparent 1px 2px);"></div>
<div style="top:477px;font-size:11px;line-height:13px;color:#000;white-space:nowrap;font-weight:bold;letter-spacing:0.35px;left:33.6px;width:115px;overflow:hidden;word-spacing:1px;">Miscellaneous</div>
<div style="left:36px;top:495px;width:9px;height:9px;background:#fff;border:1px solid #808080;box-sizing:border-box;"></div>
<div style="left:38px;top:499px;width:5px;height:1px;background:#000;"></div>
<div style="left:40px;top:497px;width:1px;height:5px;background:#000;"></div>
<div style="left:46px;top:499px;width:4px;height:1px;background:repeating-linear-gradient(90deg,#808080 0 1px,transparent 1px 2px);"></div>
<div style="top:493px;font-size:11px;line-height:13px;color:#000;white-space:nowrap;font-weight:bold;letter-spacing:0.35px;left:52.8px;width:96px;overflow:hidden;word-spacing:1px;">AnimObject</div>
<div style="left:36px;top:511px;width:9px;height:9px;background:#fff;border:1px solid #808080;box-sizing:border-box;"></div>
<div style="left:38px;top:515px;width:5px;height:1px;background:#000;"></div>
<div style="left:40px;top:513px;width:1px;height:5px;background:#000;"></div>
<div style="left:46px;top:515px;width:4px;height:1px;background:repeating-linear-gradient(90deg,#808080 0 1px,transparent 1px 2px);"></div>
<div style="top:509px;font-size:11px;line-height:13px;color:#000;white-space:nowrap;font-weight:bold;letter-spacing:0.35px;left:52.8px;width:96px;overflow:hidden;word-spacing:1px;">Art Object</div>
<div style="left:40px;top:531px;width:10px;height:1px;background:repeating-linear-gradient(90deg,#808080 0 1px,transparent 1px 2px);"></div>
<div style="top:525px;font-size:11px;line-height:13px;color:#000;white-space:nowrap;font-weight:bold;letter-spacing:0.35px;left:52.8px;width:96px;overflow:hidden;word-spacing:1px;">Collision Layer</div>
<div style="left:40px;top:547px;width:10px;height:1px;background:repeating-linear-gradient(90deg,#808080 0 1px,transparent 1px 2px);"></div>
<div style="top:541px;font-size:11px;line-height:13px;color:#000;white-space:nowrap;font-weight:bold;letter-spacing:0.35px;left:52.8px;width:96px;overflow:hidden;word-spacing:1px;">ColorForm</div>
<div style="left:40px;top:563px;width:10px;height:1px;background:repeating-linear-gradient(90deg,#808080 0 1px,transparent 1px 2px);"></div>
<div style="top:557px;font-size:11px;line-height:13px;color:#000;white-space:nowrap;font-weight:bold;letter-spacing:0.35px;left:52.8px;width:96px;overflow:hidden;word-spacing:1px;">CombatStyle</div>
<div style="left:40px;top:579px;width:10px;height:1px;background:repeating-linear-gradient(90deg,#808080 0 1px,transparent 1px 2px);"></div>
<div style="top:573px;font-size:11px;line-height:13px;color:#000;white-space:nowrap;font-weight:bold;letter-spacing:0.35px;left:52.8px;width:96px;overflow:hidden;word-spacing:1px;">FormList</div>
<div style="left:40px;top:595px;width:10px;height:1px;background:repeating-linear-gradient(90deg,#808080 0 1px,transparent 1px 2px);"></div>
<div style="top:589px;font-size:11px;line-height:13px;color:#000;white-space:nowrap;font-weight:bold;letter-spacing:0.35px;left:52.8px;width:96px;overflow:hidden;word-spacing:1px;">Global</div>
<div style="left:40px;top:611px;width:10px;height:1px;background:repeating-linear-gradient(90deg,#808080 0 1px,transparent 1px 2px);"></div>
<div style="top:605px;font-size:11px;line-height:13px;color:#000;white-space:nowrap;font-weight:bold;letter-spacing:0.35px;left:52.8px;width:96px;overflow:hidden;word-spacing:1px;">IdleMarker</div>
<div style="left:171px;top:109px;width:29px;height:526px;background:#fff;border:1px solid;border-color:#a0a0a0 #fff #fff #a0a0a0;box-shadow:inset 1px 1px 0 #696969,inset -1px -1px 0 #e3e3e3;box-sizing:border-box;"></div>
<div style="left:173px;top:111px;width:27px;height:16px;background:#f0f0f0;border:1px solid;border-color:#fff #696969 #696969 #fff;box-shadow:inset 1px 1px 0 #e3e3e3,inset -1px -1px 0 #a0a0a0;box-sizing:border-box;"></div>
<div style="top:113px;font-size:11px;line-height:13px;color:#000;white-space:nowrap;letter-spacing:-0.15px;left:179px;">E</div>
<div style="left:173px;top:130px;width:27px;height:1px;background:#ececec;"></div>
<div style="left:177px;top:138px;width:6px;height:2px;background:#000;"></div>
<div style="left:180px;top:138px;width:3px;height:8px;background:#000;"></div>
<div style="left:173px;top:147px;width:27px;height:1px;background:#ececec;"></div>
<div style="left:177px;top:155px;width:6px;height:2px;background:#000;"></div>
<div style="left:180px;top:155px;width:3px;height:8px;background:#000;"></div>
<div style="left:173px;top:164px;width:27px;height:1px;background:#ececec;"></div>
<div style="left:177px;top:172px;width:6px;height:2px;background:#000;"></div>
<div style="left:180px;top:172px;width:3px;height:8px;background:#000;"></div>
<div style="left:173px;top:181px;width:27px;height:1px;background:#ececec;"></div>
<div style="left:177px;top:189px;width:6px;height:2px;background:#000;"></div>
<div style="left:180px;top:189px;width:3px;height:8px;background:#000;"></div>
<div style="left:173px;top:198px;width:27px;height:1px;background:#ececec;"></div>
<div style="left:177px;top:206px;width:6px;height:2px;background:#000;"></div>
<div style="left:180px;top:206px;width:3px;height:8px;background:#000;"></div>
<div style="left:173px;top:215px;width:27px;height:1px;background:#ececec;"></div>
<div style="left:177px;top:223px;width:6px;height:2px;background:#000;"></div>
<div style="left:180px;top:223px;width:3px;height:8px;background:#000;"></div>
<div style="left:173px;top:232px;width:27px;height:1px;background:#ececec;"></div>
<div style="left:177px;top:240px;width:6px;height:2px;background:#000;"></div>
<div style="left:180px;top:240px;width:3px;height:8px;background:#000;"></div>
<div style="left:173px;top:249px;width:27px;height:1px;background:#ececec;"></div>
<div style="left:177px;top:257px;width:6px;height:2px;background:#000;"></div>
<div style="left:180px;top:257px;width:3px;height:8px;background:#000;"></div>
<div style="left:173px;top:266px;width:27px;height:1px;background:#ececec;"></div>
<div style="left:177px;top:274px;width:6px;height:2px;background:#000;"></div>
<div style="left:180px;top:274px;width:3px;height:8px;background:#000;"></div>
<div style="left:173px;top:283px;width:27px;height:1px;background:#ececec;"></div>
<div style="left:177px;top:291px;width:6px;height:2px;background:#000;"></div>
<div style="left:180px;top:291px;width:3px;height:8px;background:#000;"></div>
<div style="left:173px;top:300px;width:27px;height:1px;background:#ececec;"></div>
<div style="left:177px;top:308px;width:6px;height:2px;background:#000;"></div>
<div style="left:180px;top:308px;width:3px;height:8px;background:#000;"></div>
<div style="left:173px;top:317px;width:27px;height:1px;background:#ececec;"></div>
<div style="left:177px;top:325px;width:6px;height:2px;background:#000;"></div>
<div style="left:180px;top:325px;width:3px;height:8px;background:#000;"></div>
<div style="left:173px;top:334px;width:27px;height:1px;background:#ececec;"></div>
<div style="left:177px;top:342px;width:6px;height:2px;background:#000;"></div>
<div style="left:180px;top:342px;width:3px;height:8px;background:#000;"></div>
<div style="left:173px;top:351px;width:27px;height:1px;background:#ececec;"></div>
<div style="left:177px;top:359px;width:6px;height:2px;background:#000;"></div>
<div style="left:180px;top:359px;width:3px;height:8px;background:#000;"></div>
<div style="left:173px;top:368px;width:27px;height:1px;background:#ececec;"></div>
<div style="left:177px;top:376px;width:6px;height:2px;background:#000;"></div>
<div style="left:180px;top:376px;width:3px;height:8px;background:#000;"></div>
<div style="left:173px;top:385px;width:27px;height:1px;background:#ececec;"></div>
<div style="left:177px;top:393px;width:6px;height:2px;background:#000;"></div>
<div style="left:180px;top:393px;width:3px;height:8px;background:#000;"></div>
<div style="left:173px;top:402px;width:27px;height:1px;background:#ececec;"></div>
<div style="left:177px;top:410px;width:6px;height:2px;background:#000;"></div>
<div style="left:180px;top:410px;width:3px;height:8px;background:#000;"></div>
<div style="left:173px;top:419px;width:27px;height:1px;background:#ececec;"></div>
<div style="left:177px;top:427px;width:6px;height:2px;background:#000;"></div>
<div style="left:180px;top:427px;width:3px;height:8px;background:#000;"></div>
<div style="left:173px;top:436px;width:27px;height:1px;background:#ececec;"></div>
<div style="left:177px;top:444px;width:6px;height:2px;background:#000;"></div>
<div style="left:180px;top:444px;width:3px;height:8px;background:#000;"></div>
<div style="left:173px;top:453px;width:27px;height:1px;background:#ececec;"></div>
<div style="left:177px;top:461px;width:6px;height:2px;background:#000;"></div>
<div style="left:180px;top:461px;width:3px;height:8px;background:#000;"></div>
<div style="left:173px;top:470px;width:27px;height:1px;background:#ececec;"></div>
<div style="left:177px;top:478px;width:6px;height:2px;background:#000;"></div>
<div style="left:180px;top:478px;width:3px;height:8px;background:#000;"></div>
<div style="left:173px;top:487px;width:27px;height:1px;background:#ececec;"></div>
<div style="left:177px;top:495px;width:6px;height:2px;background:#000;"></div>
<div style="left:180px;top:495px;width:3px;height:8px;background:#000;"></div>
<div style="left:173px;top:504px;width:27px;height:1px;background:#ececec;"></div>
<div style="left:177px;top:512px;width:6px;height:2px;background:#000;"></div>
<div style="left:180px;top:512px;width:3px;height:8px;background:#000;"></div>
<div style="left:173px;top:521px;width:27px;height:1px;background:#ececec;"></div>
<div style="left:177px;top:529px;width:6px;height:2px;background:#000;"></div>
<div style="left:180px;top:529px;width:3px;height:8px;background:#000;"></div>
<div style="left:173px;top:538px;width:27px;height:1px;background:#ececec;"></div>
<div style="left:177px;top:546px;width:6px;height:2px;background:#000;"></div>
<div style="left:180px;top:546px;width:3px;height:8px;background:#000;"></div>
<div style="left:173px;top:555px;width:27px;height:1px;background:#ececec;"></div>
<div style="left:177px;top:563px;width:6px;height:2px;background:#000;"></div>
<div style="left:180px;top:563px;width:3px;height:8px;background:#000;"></div>
<div style="left:173px;top:572px;width:27px;height:1px;background:#ececec;"></div>
<div style="left:177px;top:580px;width:6px;height:2px;background:#000;"></div>
<div style="left:180px;top:580px;width:3px;height:8px;background:#000;"></div>
<div style="left:173px;top:589px;width:27px;height:1px;background:#ececec;"></div>
<div style="left:177px;top:597px;width:6px;height:2px;background:#000;"></div>
<div style="left:180px;top:597px;width:3px;height:8px;background:#000;"></div>
<div style="left:173px;top:606px;width:27px;height:1px;background:#ececec;"></div>
<div style="left:177px;top:614px;width:6px;height:2px;background:#000;"></div>
<div style="left:180px;top:614px;width:3px;height:8px;background:#000;"></div>
<div style="left:173px;top:623px;width:27px;height:1px;background:#ececec;"></div>
<div style="left:182px;top:0px;width:1002px;height:767px;background:linear-gradient(180deg,#97b3cf 0%,#a9c3dc 12px,#bcd2e7 25px,#d3e2f0 40px,#d9e5f2 100%);border:1px solid #111;border-radius:6px 6px 0 0;box-sizing:border-box;box-shadow:inset 1px 1px 0 #eef4fa;"></div>
<div style="top:7px;font-size:12px;line-height:14px;color:#0c1a2a;white-space:nowrap;left:189.5px;-webkit-text-stroke:0.25px #0c1a2a;">Magic Effect</div>
<div style="left:1082px;top:5px;width:31px;height:17px;border:1px solid #4a5a70;border-radius:3px;background:linear-gradient(180deg,#dfe8f3 0%,#c6d5e6 45%,#a9bdd4 50%,#bcd0e4 100%);box-sizing:border-box;"></div>
<div style="left:1091px;top:13px;width:12px;height:4px;background:#fff;border:1px solid #333;box-sizing:border-box;"></div>
<div style="left:1114px;top:5px;width:32px;height:17px;border:1px solid #4a5a70;border-radius:3px;background:linear-gradient(180deg,#dfe8f3 0%,#c6d5e6 45%,#a9bdd4 50%,#bcd0e4 100%);box-sizing:border-box;"></div>
<div style="left:1125px;top:9px;width:11px;height:9px;border:2px solid #fff;outline:1px solid #333;box-shadow:inset 0 0 0 1px #333;box-sizing:border-box;"></div>
<div style="left:1148px;top:5px;width:31px;height:17px;border:1px solid #3a1a14;border-radius:3px;background:linear-gradient(180deg,#eab0a0 0%,#d97d66 45%,#c2472a 50%,#d4624a 85%,#eea08c 100%);box-sizing:border-box;"></div>
<svg style="left:1156px;top:7px" width="16" height="13"><path d="M4 3.5 L12 9.5 M12 3.5 L4 9.5" stroke="#3a1a14" stroke-width="4.6" stroke-linecap="round"/><path d="M4 3.5 L12 9.5 M12 3.5 L4 9.5" stroke="#fff" stroke-width="2.4" stroke-linecap="square"/></svg>
<div style="left:185px;top:25px;width:995px;height:741px;background:#f0f0f0;"></div>
<div style="left:0px;top:766px;width:1184px;height:1px;background:#111;"></div>
<div style="left:0px;top:767px;width:1366px;height:1px;background:#e4e4e4;"></div>
<div style="top:39px;font-size:11px;line-height:13px;color:#000;white-space:nowrap;letter-spacing:-0.15px;left:-88px;width:400px;text-align:right;">ID</div>
<div style="left:323px;top:37px;width:188px;height:19px;background:#fff;border:1px solid;border-color:#a0a0a0 #fff #fff #a0a0a0;box-shadow:inset 1px 1px 0 #696969,inset -1px -1px 0 #e3e3e3;box-sizing:border-box;"></div>
<div style="top:40px;font-size:11px;line-height:13px;color:#000;white-space:nowrap;letter-spacing:-0.15px;left:326px;width:183px;overflow:hidden;">VoiceElementalFury</div>
<div style="top:63px;font-size:11px;line-height:13px;color:#000;white-space:nowrap;letter-spacing:-0.15px;left:-88px;width:400px;text-align:right;">Name</div>
<div style="left:323px;top:61px;width:188px;height:19px;background:#fff;border:1px solid;border-color:#a0a0a0 #fff #fff #a0a0a0;box-shadow:inset 1px 1px 0 #696969,inset -1px -1px 0 #e3e3e3;box-sizing:border-box;"></div>
<div style="top:64px;font-size:11px;line-height:13px;color:#000;white-space:nowrap;left:326px;width:183px;overflow:hidden;">Элементная ярость</div>
<div style="top:88px;font-size:11px;line-height:13px;color:#000;white-space:nowrap;letter-spacing:-0.15px;left:-88px;width:400px;text-align:right;">Effect Archetype</div>
<div style="left:323px;top:86px;width:188px;height:20px;background:#fff;border:1px solid;border-color:#a0a0a0 #fff #fff #a0a0a0;box-shadow:inset 1px 1px 0 #696969,inset -1px -1px 0 #e3e3e3;box-sizing:border-box;"></div>
<div style="top:90px;font-size:11px;line-height:13px;color:#000;white-space:nowrap;letter-spacing:-0.15px;left:327px;width:164px;overflow:hidden;">Enhance Weapon</div>
<div style="left:493px;top:88px;width:16px;height:16px;background:#f0f0f0;border:1px solid;border-color:#fff #696969 #696969 #fff;box-shadow:inset 1px 1px 0 #e3e3e3,inset -1px -1px 0 #a0a0a0;box-sizing:border-box;"></div>
<svg style="left:497px;top:94px" width="8" height="4"><path d="M0 0 H8 L4.0 4 Z" fill="#000"/></svg>
<div style="top:112px;font-size:11px;line-height:13px;color:#000;white-space:nowrap;letter-spacing:-0.15px;left:-88px;width:400px;text-align:right;">Casting Type</div>
<div style="left:323px;top:110px;width:188px;height:20px;background:#fff;border:1px solid;border-color:#a0a0a0 #fff #fff #a0a0a0;box-shadow:inset 1px 1px 0 #696969,inset -1px -1px 0 #e3e3e3;box-sizing:border-box;"></div>
<div style="top:114px;font-size:11px;line-height:13px;color:#000;white-space:nowrap;letter-spacing:-0.15px;left:327px;width:164px;overflow:hidden;">Fire and Forget</div>
<div style="left:493px;top:112px;width:16px;height:16px;background:#f0f0f0;border:1px solid;border-color:#fff #696969 #696969 #fff;box-shadow:inset 1px 1px 0 #e3e3e3,inset -1px -1px 0 #a0a0a0;box-sizing:border-box;"></div>
<svg style="left:497px;top:118px" width="8" height="4"><path d="M0 0 H8 L4.0 4 Z" fill="#000"/></svg>
<div style="top:136px;font-size:11px;line-height:13px;color:#000;white-space:nowrap;letter-spacing:-0.15px;left:-88px;width:400px;text-align:right;">Delivery</div>
<div style="left:323px;top:134px;width:188px;height:20px;background:#fff;border:1px solid;border-color:#a0a0a0 #fff #fff #a0a0a0;box-shadow:inset 1px 1px 0 #696969,inset -1px -1px 0 #e3e3e3;box-sizing:border-box;"></div>
<div style="top:138px;font-size:11px;line-height:13px;color:#000;white-space:nowrap;left:327px;width:164px;overflow:hidden;">на себя</div>
<div style="left:493px;top:136px;width:16px;height:16px;background:#f0f0f0;border:1px solid;border-color:#fff #696969 #696969 #fff;box-shadow:inset 1px 1px 0 #e3e3e3,inset -1px -1px 0 #a0a0a0;box-sizing:border-box;"></div>
<svg style="left:497px;top:142px" width="8" height="4"><path d="M0 0 H8 L4.0 4 Z" fill="#000"/></svg>
<div style="top:161px;font-size:11px;line-height:13px;color:#000;white-space:nowrap;letter-spacing:-0.15px;left:-88px;width:400px;text-align:right;">Magic Skill</div>
<div style="left:323px;top:159px;width:188px;height:20px;background:#fff;border:1px solid;border-color:#a0a0a0 #fff #fff #a0a0a0;box-shadow:inset 1px 1px 0 #696969,inset -1px -1px 0 #e3e3e3;box-sizing:border-box;"></div>
<div style="top:163px;font-size:11px;line-height:13px;color:#000;white-space:nowrap;letter-spacing:-0.15px;left:330px;width:161px;overflow:hidden;">NONE</div>
<div style="left:493px;top:161px;width:16px;height:16px;background:#f0f0f0;border:1px solid;border-color:#fff #696969 #696969 #fff;box-shadow:inset 1px 1px 0 #e3e3e3,inset -1px -1px 0 #a0a0a0;box-sizing:border-box;"></div>
<svg style="left:497px;top:168px" width="8" height="4"><path d="M0 0 H8 L4.0 4 Z" fill="#000"/></svg>
<div style="top:185px;font-size:11px;line-height:13px;color:#000;white-space:nowrap;letter-spacing:-0.15px;left:-88px;width:400px;text-align:right;">Minimum Skill Level</div>
<div style="left:323px;top:183px;width:70px;height:19px;background:#fff;border:1px solid;border-color:#a0a0a0 #fff #fff #a0a0a0;box-shadow:inset 1px 1px 0 #696969,inset -1px -1px 0 #e3e3e3;box-sizing:border-box;"></div>
<div style="top:186px;font-size:11px;line-height:13px;color:#000;white-space:nowrap;letter-spacing:-0.15px;left:326px;width:65px;overflow:hidden;">25</div>
<div style="left:196px;top:207px;width:36px;height:43px;background:#f0f0f0;border:1px solid;border-color:#fff #696969 #696969 #fff;box-shadow:inset 1px 1px 0 #e3e3e3,inset -1px -1px 0 #a0a0a0;box-sizing:border-box;"></div>
<div style="top:222px;font-size:11px;line-height:13px;color:#000;white-space:nowrap;letter-spacing:-0.15px;left:14.0px;width:400px;text-align:center;"></div>
<div style="top:216px;font-size:11px;line-height:13px;color:#000;white-space:nowrap;letter-spacing:-0.15px;left:14px;width:400px;text-align:center;">Edit</div>
<div style="top:229px;font-size:11px;line-height:13px;color:#000;white-space:nowrap;letter-spacing:-0.15px;left:14px;width:400px;text-align:center;">Form</div>
<div style="top:209px;font-size:11px;line-height:13px;color:#000;white-space:nowrap;letter-spacing:-0.15px;left:-88px;width:400px;text-align:right;">Assoc. Item 1</div>
<div style="left:323px;top:207px;width:188px;height:20px;background:#fff;border:1px solid;border-color:#a0a0a0 #fff #fff #a0a0a0;box-shadow:inset 1px 1px 0 #696969,inset -1px -1px 0 #e3e3e3;box-sizing:border-box;"></div>
<div style="top:211px;font-size:11px;line-height:13px;color:#000;white-space:nowrap;letter-spacing:-0.15px;left:327px;width:164px;overflow:hidden;">VoiceEnchElementalFury</div>
<div style="left:493px;top:209px;width:16px;height:16px;background:#f0f0f0;border:1px solid;border-color:#fff #696969 #696969 #fff;box-shadow:inset 1px 1px 0 #e3e3e3,inset -1px -1px 0 #a0a0a0;box-sizing:border-box;"></div>
<svg style="left:497px;top:216px" width="8" height="4"><path d="M0 0 H8 L4.0 4 Z" fill="#000"/></svg>
<div style="top:234px;font-size:11px;line-height:13px;color:#000;white-space:nowrap;letter-spacing:-0.15px;left:-88px;width:400px;text-align:right;">Assoc. Item 2</div>
<div style="left:323px;top:232px;width:188px;height:20px;background:#fff;border:1px solid;border-color:#a0a0a0 #fff #fff #a0a0a0;box-shadow:inset 1px 1px 0 #696969,inset -1px -1px 0 #e3e3e3;box-sizing:border-box;background:#f0f0f0;"></div>
<div style="left:493px;top:234px;width:16px;height:16px;background:#f0f0f0;border:1px solid;border-color:#fff #696969 #696969 #fff;box-shadow:inset 1px 1px 0 #e3e3e3,inset -1px -1px 0 #a0a0a0;box-sizing:border-box;"></div>
<svg style="left:497px;top:240px" width="8" height="4"><path d="M0 0 H8 L4.0 4 Z" fill="#a0a0a0"/></svg>
<div style="top:258px;font-size:11px;line-height:13px;color:#000;white-space:nowrap;letter-spacing:-0.15px;left:-88px;width:400px;text-align:right;">2nd AV Weight</div>
<div style="left:323px;top:256px;width:70px;height:19px;background:#fff;border:1px solid;border-color:#a0a0a0 #fff #fff #a0a0a0;box-shadow:inset 1px 1px 0 #696969,inset -1px -1px 0 #e3e3e3;box-sizing:border-box;background:#f0f0f0;"></div>
<div style="top:283px;font-size:11px;line-height:13px;color:#000;white-space:nowrap;letter-spacing:-0.15px;left:-88px;width:400px;text-align:right;">Resist Value</div>
<div style="left:323px;top:281px;width:188px;height:20px;background:#fff;border:1px solid;border-color:#a0a0a0 #fff #fff #a0a0a0;box-shadow:inset 1px 1px 0 #696969,inset -1px -1px 0 #e3e3e3;box-sizing:border-box;"></div>
<div style="top:285px;font-size:11px;line-height:13px;color:#000;white-space:nowrap;letter-spacing:-0.15px;left:330px;width:161px;overflow:hidden;">NONE</div>
<div style="left:493px;top:283px;width:16px;height:16px;background:#f0f0f0;border:1px solid;border-color:#fff #696969 #696969 #fff;box-shadow:inset 1px 1px 0 #e3e3e3,inset -1px -1px 0 #a0a0a0;box-sizing:border-box;"></div>
<svg style="left:497px;top:290px" width="8" height="4"><path d="M0 0 H8 L4.0 4 Z" fill="#000"/></svg>
<div style="top:307px;font-size:11px;line-height:13px;color:#000;white-space:nowrap;letter-spacing:-0.15px;left:-88px;width:400px;text-align:right;">Perk to Apply</div>
<div style="left:323px;top:305px;width:188px;height:20px;background:#fff;border:1px solid;border-color:#a0a0a0 #fff #fff #a0a0a0;box-shadow:inset 1px 1px 0 #696969,inset -1px -1px 0 #e3e3e3;box-sizing:border-box;"></div>
<div style="top:309px;font-size:11px;line-height:13px;color:#000;white-space:nowrap;letter-spacing:-0.15px;left:330px;width:161px;overflow:hidden;">NONE</div>
<div style="left:493px;top:307px;width:16px;height:16px;background:#f0f0f0;border:1px solid;border-color:#fff #696969 #696969 #fff;box-shadow:inset 1px 1px 0 #e3e3e3,inset -1px -1px 0 #a0a0a0;box-sizing:border-box;"></div>
<svg style="left:497px;top:314px" width="8" height="4"><path d="M0 0 H8 L4.0 4 Z" fill="#000"/></svg>
<div style="top:341px;font-size:11px;line-height:13px;color:#000;white-space:nowrap;letter-spacing:-0.15px;left:-127px;width:400px;text-align:right;">Taper Duration</div>
<div style="left:278px;top:339px;width:70px;height:19px;background:#fff;border:1px solid;border-color:#a0a0a0 #fff #fff #a0a0a0;box-shadow:inset 1px 1px 0 #696969,inset -1px -1px 0 #e3e3e3;box-sizing:border-box;"></div>
<div style="top:342px;font-size:11px;line-height:13px;color:#000;white-space:nowrap;letter-spacing:-0.15px;left:281px;width:65px;overflow:hidden;">0.00</div>
<div style="top:366px;font-size:11px;line-height:13px;color:#000;white-space:nowrap;letter-spacing:-0.15px;left:-127px;width:400px;text-align:right;">Taper Weight</div>
<div style="left:278px;top:364px;width:70px;height:19px;background:#fff;border:1px solid;border-color:#a0a0a0 #fff #fff #a0a0a0;box-shadow:inset 1px 1px 0 #696969,inset -1px -1px 0 #e3e3e3;box-sizing:border-box;"></div>
<div style="top:367px;font-size:11px;line-height:13px;color:#000;white-space:nowrap;letter-spacing:-0.15px;left:281px;width:65px;overflow:hidden;">0.20</div>
<div style="top:391px;font-size:11px;line-height:13px;color:#000;white-space:nowrap;letter-spacing:-0.15px;left:-127px;width:400px;text-align:right;">Taper Curve</div>
<div style="left:278px;top:389px;width:70px;height:19px;background:#fff;border:1px solid;border-color:#a0a0a0 #fff #fff #a0a0a0;box-shadow:inset 1px 1px 0 #696969,inset -1px -1px 0 #e3e3e3;box-sizing:border-box;"></div>
<div style="top:392px;font-size:11px;line-height:13px;color:#000;white-space:nowrap;letter-spacing:-0.15px;left:281px;width:65px;overflow:hidden;">2.00</div>
<div style="top:341px;font-size:11px;line-height:13px;color:#000;white-space:nowrap;letter-spacing:-0.15px;left:37px;width:400px;text-align:right;">Base Cost</div>
<div style="left:442px;top:339px;width:70px;height:19px;background:#fff;border:1px solid;border-color:#a0a0a0 #fff #fff #a0a0a0;box-shadow:inset 1px 1px 0 #696969,inset -1px -1px 0 #e3e3e3;box-sizing:border-box;"></div>
<div style="top:342px;font-size:11px;line-height:13px;color:#000;white-space:nowrap;letter-spacing:-0.15px;left:445px;width:65px;overflow:hidden;">0.0000</div>
<div style="top:366px;font-size:11px;line-height:13px;color:#000;white-space:nowrap;letter-spacing:-0.15px;left:37px;width:400px;text-align:right;">Skill Usage Mult</div>
<div style="left:442px;top:364px;width:70px;height:19px;background:#fff;border:1px solid;border-color:#a0a0a0 #fff #fff #a0a0a0;box-shadow:inset 1px 1px 0 #696969,inset -1px -1px 0 #e3e3e3;box-sizing:border-box;"></div>
<div style="top:367px;font-size:11px;line-height:13px;color:#000;white-space:nowrap;letter-spacing:-0.15px;left:445px;width:65px;overflow:hidden;">0.0000</div>
<svg style="left:185px;top:25px" width="340" height="220"><path d="M51 77 Q70 73 92 75 Q112 78 127 76" stroke="#7d6c14" stroke-width="2.6" fill="none" stroke-linecap="round"/><path d="M88 124.5 Q108 123 128 126.5" stroke="#7d6c14" stroke-width="2.6" fill="none" stroke-linecap="round"/><path d="M56 183 Q50 176 70 178 Q95 175 120 178 Q137 182 134 192 Q132 200 100 200 Q66 199 56 190 Q50 184 62 180" stroke="#7d6c14" stroke-width="2.8" fill="none" stroke-linecap="round"/><path d="M140 205 Q200 201 270 204" stroke="#7d6c14" stroke-width="2.8" fill="none" stroke-linecap="round"/></svg>
<div style="left:196px;top:423px;width:316px;height:105px;border:1px solid #a0a0a0;box-shadow:1px 1px 0 #fff, inset 1px 1px 0 #fff;box-sizing:border-box;"></div>
<div style="left:203px;top:417px;height:13px;line-height:13px;font-size:11px;padding:0 1px;background:#f0f0f0;white-space:nowrap;">Flags</div>
<div style="left:202px;top:436px;width:13px;height:13px;background:#fff;border:1px solid;border-color:#a0a0a0 #fff #fff #a0a0a0;box-shadow:inset 1px 1px 0 #696969,inset -1px -1px 0 #e3e3e3;box-sizing:border-box;background:#fff;"></div>
<div style="top:436px;font-size:11px;line-height:13px;color:#000;white-space:nowrap;letter-spacing:-0.15px;left:221px;">Hostile</div>
<div style="left:202px;top:454px;width:13px;height:13px;background:#fff;border:1px solid;border-color:#a0a0a0 #fff #fff #a0a0a0;box-shadow:inset 1px 1px 0 #696969,inset -1px -1px 0 #e3e3e3;box-sizing:border-box;background:#fff;"></div>
<div style="top:454px;font-size:11px;line-height:13px;color:#000;white-space:nowrap;letter-spacing:-0.15px;left:221px;">Detrimental</div>
<div style="left:202px;top:472px;width:13px;height:13px;background:#fff;border:1px solid;border-color:#a0a0a0 #fff #fff #a0a0a0;box-shadow:inset 1px 1px 0 #696969,inset -1px -1px 0 #e3e3e3;box-sizing:border-box;background:#fff;"></div>
<svg style="left:202px;top:472px" width="13" height="13"><path d="M3 5.5 L5 7.5 L10 2.5 L10 4.5 L5 9.5 L3 7.5Z" fill="#000"/><path d="M3 5 L5 7 L10 2 M3 6 L5 8 L10 3 M3 7 L5 9 L10 4" stroke="#000" stroke-width="1" fill="none"/></svg>
<div style="top:472px;font-size:11px;line-height:13px;color:#000;white-space:nowrap;letter-spacing:-0.15px;left:221px;">Recover</div>
<div style="left:202px;top:490px;width:13px;height:13px;background:#fff;border:1px solid;border-color:#a0a0a0 #fff #fff #a0a0a0;box-shadow:inset 1px 1px 0 #696969,inset -1px -1px 0 #e3e3e3;box-sizing:border-box;background:#fff;"></div>
<div style="top:490px;font-size:11px;line-height:13px;color:#000;white-space:nowrap;letter-spacing:-0.15px;left:221px;">FX Persist</div>
<div style="left:202px;top:508px;width:13px;height:13px;background:#fff;border:1px solid;border-color:#a0a0a0 #fff #fff #a0a0a0;box-shadow:inset 1px 1px 0 #696969,inset -1px -1px 0 #e3e3e3;box-sizing:border-box;background:#f0f0f0;"></div>
<div style="top:508px;font-size:11px;line-height:13px;color:#a0a0a0;white-space:nowrap;letter-spacing:-0.15px;left:221px;">Snap to Navmesh</div>
<div style="left:310px;top:436px;width:13px;height:13px;background:#fff;border:1px solid;border-color:#a0a0a0 #fff #fff #a0a0a0;box-shadow:inset 1px 1px 0 #696969,inset -1px -1px 0 #e3e3e3;box-sizing:border-box;background:#fff;"></div>
<div style="top:436px;font-size:11px;line-height:13px;color:#000;white-space:nowrap;letter-spacing:-0.15px;left:328px;">No Recast</div>
<div style="left:310px;top:454px;width:13px;height:13px;background:#fff;border:1px solid;border-color:#a0a0a0 #fff #fff #a0a0a0;box-shadow:inset 1px 1px 0 #696969,inset -1px -1px 0 #e3e3e3;box-sizing:border-box;background:#fff;"></div>
<div style="top:454px;font-size:11px;line-height:13px;color:#000;white-space:nowrap;letter-spacing:-0.15px;left:328px;">No Hit Effect</div>
<div style="left:310px;top:472px;width:13px;height:13px;background:#fff;border:1px solid;border-color:#a0a0a0 #fff #fff #a0a0a0;box-shadow:inset 1px 1px 0 #696969,inset -1px -1px 0 #e3e3e3;box-sizing:border-box;background:#fff;"></div>
<div style="top:472px;font-size:11px;line-height:13px;color:#000;white-space:nowrap;letter-spacing:-0.15px;left:328px;">No Death Dispel</div>
<div style="left:310px;top:490px;width:13px;height:13px;background:#fff;border:1px solid;border-color:#a0a0a0 #fff #fff #a0a0a0;box-shadow:inset 1px 1px 0 #696969,inset -1px -1px 0 #e3e3e3;box-sizing:border-box;background:#fff;"></div>
<div style="top:490px;font-size:11px;line-height:13px;color:#000;white-space:nowrap;letter-spacing:-0.15px;left:328px;">No Duration</div>
<div style="left:310px;top:508px;width:13px;height:13px;background:#fff;border:1px solid;border-color:#a0a0a0 #fff #fff #a0a0a0;box-shadow:inset 1px 1px 0 #696969,inset -1px -1px 0 #e3e3e3;box-sizing:border-box;background:#fff;"></div>
<div style="top:508px;font-size:11px;line-height:13px;color:#000;white-space:nowrap;letter-spacing:-0.15px;left:328px;">No Hit Event</div>
<div style="left:418px;top:436px;width:13px;height:13px;background:#fff;border:1px solid;border-color:#a0a0a0 #fff #fff #a0a0a0;box-shadow:inset 1px 1px 0 #696969,inset -1px -1px 0 #e3e3e3;box-sizing:border-box;background:#fff;"></div>
<div style="top:436px;font-size:11px;line-height:13px;color:#000;white-space:nowrap;letter-spacing:-0.15px;left:436px;width:65px;overflow:hidden;">No Magnitude</div>
<div style="left:418px;top:454px;width:13px;height:13px;background:#fff;border:1px solid;border-color:#a0a0a0 #fff #fff #a0a0a0;box-shadow:inset 1px 1px 0 #696969,inset -1px -1px 0 #e3e3e3;box-sizing:border-box;background:#fff;"></div>
<svg style="left:418px;top:454px" width="13" height="13"><path d="M3 5.5 L5 7.5 L10 2.5 L10 4.5 L5 9.5 L3 7.5Z" fill="#000"/><path d="M3 5 L5 7 L10 2 M3 6 L5 8 L10 3 M3 7 L5 9 L10 4" stroke="#000" stroke-width="1" fill="none"/></svg>
<div style="top:454px;font-size:11px;line-height:13px;color:#000;white-space:nowrap;letter-spacing:-0.15px;left:436px;width:65px;overflow:hidden;">No Area</div>
<div style="left:418px;top:472px;width:13px;height:13px;background:#fff;border:1px solid;border-color:#a0a0a0 #fff #fff #a0a0a0;box-shadow:inset 1px 1px 0 #696969,inset -1px -1px 0 #e3e3e3;box-sizing:border-box;background:#fff;"></div>
<div style="top:472px;font-size:11px;line-height:13px;color:#000;white-space:nowrap;letter-spacing:-0.15px;left:436px;width:65px;overflow:hidden;">Painless</div>
<div style="left:418px;top:490px;width:13px;height:13px;background:#fff;border:1px solid;border-color:#a0a0a0 #fff #fff #a0a0a0;box-shadow:inset 1px 1px 0 #696969,inset -1px -1px 0 #e3e3e3;box-sizing:border-box;background:#fff;"></div>
<div style="top:490px;font-size:11px;line-height:13px;color:#000;white-space:nowrap;letter-spacing:-0.15px;left:436px;width:65px;overflow:hidden;">Gory Visuals</div>
<div style="left:418px;top:508px;width:13px;height:13px;background:#fff;border:1px solid;border-color:#a0a0a0 #fff #fff #a0a0a0;box-shadow:inset 1px 1px 0 #696969,inset -1px -1px 0 #e3e3e3;box-sizing:border-box;background:#fff;"></div>
<div style="top:508px;font-size:11px;line-height:13px;color:#000;white-space:nowrap;letter-spacing:-0.15px;left:436px;width:65px;overflow:hidden;">Hide in UI</div>
<div style="top:537px;font-size:11px;line-height:13px;color:#000;white-space:nowrap;letter-spacing:-0.15px;left:197px;">Keywords</div>
<div style="left:259px;top:540px;width:13px;height:13px;background:#fff;border:1px solid;border-color:#a0a0a0 #fff #fff #a0a0a0;box-shadow:inset 1px 1px 0 #696969,inset -1px -1px 0 #e3e3e3;box-sizing:border-box;background:#fff;"></div>
<div style="top:540px;font-size:11px;line-height:13px;color:#000;white-space:nowrap;letter-spacing:-0.15px;left:277px;">Dispel Effects with these Keywords:</div>
<div style="left:197px;top:553px;width:315px;height:82px;background:#fff;border:1px solid;border-color:#a0a0a0 #fff #fff #a0a0a0;box-shadow:inset 1px 1px 0 #696969,inset -1px -1px 0 #e3e3e3;box-sizing:border-box;"></div>
<div style="left:199px;top:555px;width:292px;height:16px;background:#f0f0f0;border:1px solid;border-color:#fff #696969 #696969 #fff;box-shadow:inset 1px 1px 0 #e3e3e3,inset -1px -1px 0 #a0a0a0;box-sizing:border-box;"></div>
<div style="left:491px;top:555px;width:19px;height:16px;background:#f0f0f0;border:1px solid;border-color:#fff #696969 #696969 #fff;box-shadow:inset 1px 1px 0 #e3e3e3,inset -1px -1px 0 #a0a0a0;box-sizing:border-box;"></div>
<div style="top:557px;font-size:11px;line-height:13px;color:#000;white-space:nowrap;letter-spacing:-0.15px;left:203px;">Editor ID</div>
<div style="left:199px;top:587px;width:311px;height:1px;background:#ececec;"></div>
<div style="left:199px;top:601px;width:311px;height:1px;background:#ececec;"></div>
<div style="left:199px;top:615px;width:311px;height:1px;background:#ececec;"></div>
<div style="left:199px;top:629px;width:311px;height:1px;background:#ececec;"></div>
<div style="left:491px;top:571px;width:1px;height:62px;background:#e4e4e4;"></div>
<div style="left:494px;top:571px;width:1px;height:62px;background:#e4e4e4;"></div>
<div style="top:574px;font-size:11px;line-height:13px;color:#000;white-space:nowrap;letter-spacing:-0.15px;left:202px;">MagicShout</div>
<div style="top:574px;font-size:11px;line-height:13px;color:#000;white-space:nowrap;letter-spacing:-0.15px;left:497px;width:13px;overflow:hidden;">(...</div>
<div style="top:645px;font-size:11px;line-height:13px;color:#000;white-space:nowrap;letter-spacing:-0.15px;left:197px;">Counter Effects</div>
<div style="left:197px;top:660px;width:315px;height:81px;background:#fff;border:1px solid;border-color:#a0a0a0 #fff #fff #a0a0a0;box-shadow:inset 1px 1px 0 #696969,inset -1px -1px 0 #e3e3e3;box-sizing:border-box;"></div>
<div style="left:199px;top:662px;width:146px;height:16px;background:#f0f0f0;border:1px solid;border-color:#fff #696969 #696969 #fff;box-shadow:inset 1px 1px 0 #e3e3e3,inset -1px -1px 0 #a0a0a0;box-sizing:border-box;"></div>
<div style="left:346px;top:662px;width:148px;height:16px;background:#f0f0f0;border:1px solid;border-color:#fff #696969 #696969 #fff;box-shadow:inset 1px 1px 0 #e3e3e3,inset -1px -1px 0 #a0a0a0;box-sizing:border-box;"></div>
<div style="left:494px;top:662px;width:16px;height:16px;background:#f0f0f0;border:1px solid;border-color:#fff #696969 #696969 #fff;box-shadow:inset 1px 1px 0 #e3e3e3,inset -1px -1px 0 #a0a0a0;box-sizing:border-box;"></div>
<div style="top:664px;font-size:11px;line-height:13px;color:#000;white-space:nowrap;letter-spacing:-0.15px;left:204px;">EditorID</div>
<div style="top:664px;font-size:11px;line-height:13px;color:#000;white-space:nowrap;letter-spacing:-0.15px;left:354px;">Name</div>
<div style="left:199px;top:693px;width:311px;height:1px;background:#ececec;"></div>
<div style="left:199px;top:707px;width:311px;height:1px;background:#ececec;"></div>
<div style="left:199px;top:721px;width:311px;height:1px;background:#ececec;"></div>
<div style="left:199px;top:735px;width:311px;height:1px;background:#ececec;"></div>
<div style="left:344px;top:678px;width:1px;height:61px;background:#e4e4e4;"></div>
<div style="left:348px;top:678px;width:1px;height:61px;background:#e4e4e4;"></div>
<div style="left:494px;top:678px;width:1px;height:61px;background:#e4e4e4;"></div>
<div style="left:197px;top:745px;width:250px;height:20px;background:#fff;border:1px solid;border-color:#a0a0a0 #fff #fff #a0a0a0;box-shadow:inset 1px 1px 0 #696969,inset -1px -1px 0 #e3e3e3;box-sizing:border-box;"></div>
<div style="left:429px;top:747px;width:16px;height:16px;background:#f0f0f0;border:1px solid;border-color:#fff #696969 #696969 #fff;box-shadow:inset 1px 1px 0 #e3e3e3,inset -1px -1px 0 #a0a0a0;box-sizing:border-box;"></div>
<svg style="left:433px;top:754px" width="8" height="4"><path d="M0 0 H8 L4.0 4 Z" fill="#000"/></svg>
<div style="left:455px;top:745px;width:58px;height:20px;background:#f0f0f0;border:1px solid;border-color:#fff #696969 #696969 #fff;box-shadow:inset 1px 1px 0 #e3e3e3,inset -1px -1px 0 #a0a0a0;box-sizing:border-box;"></div>
<div style="top:749px;font-size:11px;line-height:13px;color:#000;white-space:nowrap;letter-spacing:-0.15px;left:284.0px;width:400px;text-align:center;">Add</div>
<div style="left:521px;top:43px;width:646px;height:168px;border:1px solid #a0a0a0;box-shadow:1px 1px 0 #fff, inset 1px 1px 0 #fff;box-sizing:border-box;"></div>
<div style="left:528px;top:37px;height:13px;line-height:13px;font-size:11px;padding:0 1px;background:#f0f0f0;white-space:nowrap;">Target Conditions</div>
<div style="left:526px;top:54px;width:635px;height:119px;background:#fff;border:1px solid;border-color:#a0a0a0 #fff #fff #a0a0a0;box-shadow:inset 1px 1px 0 #696969,inset -1px -1px 0 #e3e3e3;box-sizing:border-box;"></div>
<div style="left:528px;top:56px;width:43px;height:16px;background:#f0f0f0;border:1px solid;border-color:#fff #696969 #696969 #fff;box-shadow:inset 1px 1px 0 #e3e3e3,inset -1px -1px 0 #a0a0a0;box-sizing:border-box;"></div>
<div style="top:58px;font-size:11px;line-height:13px;color:#000;white-space:nowrap;letter-spacing:-0.15px;left:534px;">Target</div>
<div style="left:571px;top:56px;width:183px;height:16px;background:#f0f0f0;border:1px solid;border-color:#fff #696969 #696969 #fff;box-shadow:inset 1px 1px 0 #e3e3e3,inset -1px -1px 0 #a0a0a0;box-sizing:border-box;"></div>
<div style="top:58px;font-size:11px;line-height:13px;color:#000;white-space:nowrap;letter-spacing:-0.15px;left:577px;">Function Name</div>
<div style="left:754px;top:56px;width:154px;height:16px;background:#f0f0f0;border:1px solid;border-color:#fff #696969 #696969 #fff;box-shadow:inset 1px 1px 0 #e3e3e3,inset -1px -1px 0 #a0a0a0;box-sizing:border-box;"></div>
<div style="top:58px;font-size:11px;line-height:13px;color:#000;white-space:nowrap;letter-spacing:-0.15px;left:760px;">Function Info</div>
<div style="left:908px;top:56px;width:60px;height:16px;background:#f0f0f0;border:1px solid;border-color:#fff #696969 #696969 #fff;box-shadow:inset 1px 1px 0 #e3e3e3,inset -1px -1px 0 #a0a0a0;box-sizing:border-box;"></div>
<div style="top:58px;font-size:11px;line-height:13px;color:#000;white-space:nowrap;letter-spacing:-0.15px;left:914px;">Comp</div>
<div style="left:968px;top:56px;width:92px;height:16px;background:#f0f0f0;border:1px solid;border-color:#fff #696969 #696969 #fff;box-shadow:inset 1px 1px 0 #e3e3e3,inset -1px -1px 0 #a0a0a0;box-sizing:border-box;"></div>
<div style="top:58px;font-size:11px;line-height:13px;color:#000;white-space:nowrap;letter-spacing:-0.15px;left:974px;">Value</div>
<div style="left:1060px;top:56px;width:61px;height:16px;background:#f0f0f0;border:1px solid;border-color:#fff #696969 #696969 #fff;box-shadow:inset 1px 1px 0 #e3e3e3,inset -1px -1px 0 #a0a0a0;box-sizing:border-box;"></div>
<div style="left:1121px;top:56px;width:38px;height:16px;background:#f0f0f0;border:1px solid;border-color:#fff #696969 #696969 #fff;box-shadow:inset 1px 1px 0 #e3e3e3,inset -1px -1px 0 #a0a0a0;box-sizing:border-box;"></div>
<div style="left:528px;top:88px;width:631px;height:1px;background:#e8e8e8;"></div>
<div style="left:528px;top:102px;width:631px;height:1px;background:#e8e8e8;"></div>
<div style="left:528px;top:116px;width:631px;height:1px;background:#e8e8e8;"></div>
<div style="left:528px;top:130px;width:631px;height:1px;background:#e8e8e8;"></div>
<div style="left:528px;top:144px;width:631px;height:1px;background:#e8e8e8;"></div>
<div style="left:528px;top:158px;width:631px;height:1px;background:#e8e8e8;"></div>
<div style="left:570px;top:72px;width:1px;height:99px;background:#e8e8e8;"></div>
<div style="left:754px;top:72px;width:1px;height:99px;background:#e8e8e8;"></div>
<div style="left:907px;top:72px;width:1px;height:99px;background:#e8e8e8;"></div>
<div style="left:968px;top:72px;width:1px;height:99px;background:#e8e8e8;"></div>
<div style="left:1060px;top:72px;width:1px;height:99px;background:#e8e8e8;"></div>
<div style="left:1121px;top:72px;width:1px;height:99px;background:#e8e8e8;"></div>
<div style="left:526px;top:179px;width:24px;height:24px;background:#f0f0f0;border:1px solid;border-color:#fff #696969 #696969 #fff;box-shadow:inset 1px 1px 0 #e3e3e3,inset -1px -1px 0 #a0a0a0;box-sizing:border-box;"></div>
<div style="top:184px;font-size:11px;line-height:13px;color:#000;white-space:nowrap;letter-spacing:-0.15px;left:338.0px;width:400px;text-align:center;">&lt;&lt;</div>
<div style="left:554px;top:179px;width:24px;height:24px;background:#f0f0f0;border:1px solid;border-color:#fff #696969 #696969 #fff;box-shadow:inset 1px 1px 0 #e3e3e3,inset -1px -1px 0 #a0a0a0;box-sizing:border-box;"></div>
<div style="top:184px;font-size:11px;line-height:13px;color:#000;white-space:nowrap;letter-spacing:-0.15px;left:366.0px;width:400px;text-align:center;">&gt;&gt;</div>
<div style="left:1112px;top:179px;width:50px;height:24px;background:#f0f0f0;border:1px solid;border-color:#fff #696969 #696969 #fff;box-shadow:inset 1px 1px 0 #e3e3e3,inset -1px -1px 0 #a0a0a0;box-sizing:border-box;"></div>
<div style="top:185px;font-size:11px;line-height:13px;color:#000;white-space:nowrap;letter-spacing:-0.15px;left:937.0px;width:400px;text-align:center;">New</div>
<div style="top:219px;font-size:11px;line-height:13px;color:#000;white-space:nowrap;letter-spacing:-0.15px;left:229px;width:400px;text-align:right;">Menu Display Object</div>
<div style="left:632px;top:216px;width:190px;height:19px;background:#fff;border:1px solid;border-color:#a0a0a0 #fff #fff #a0a0a0;box-shadow:inset 1px 1px 0 #696969,inset -1px -1px 0 #e3e3e3;box-sizing:border-box;"></div>
<div style="top:220px;font-size:11px;line-height:13px;color:#000;white-space:nowrap;letter-spacing:-0.15px;left:636px;width:166px;overflow:hidden;">MagicHatMarker</div>
<div style="left:804px;top:218px;width:16px;height:15px;background:#f0f0f0;border:1px solid;border-color:#fff #696969 #696969 #fff;box-shadow:inset 1px 1px 0 #e3e3e3,inset -1px -1px 0 #a0a0a0;box-sizing:border-box;"></div>
<svg style="left:808px;top:224px" width="8" height="4"><path d="M0 0 H8 L4.0 4 Z" fill="#000"/></svg>
<div style="left:521px;top:247px;width:319px;height:273px;border:1px solid #a0a0a0;box-shadow:1px 1px 0 #fff, inset 1px 1px 0 #fff;box-sizing:border-box;"></div>
<div style="left:528px;top:241px;height:13px;line-height:13px;font-size:11px;padding:0 1px;background:#f0f0f0;white-space:nowrap;">Visual Effects</div>
<div style="top:262px;font-size:11px;line-height:13px;color:#000;white-space:nowrap;letter-spacing:-0.15px;left:219px;width:400px;text-align:right;">Casting Art</div>
<div style="left:632px;top:260px;width:190px;height:19px;background:#fff;border:1px solid;border-color:#a0a0a0 #fff #fff #a0a0a0;box-shadow:inset 1px 1px 0 #696969,inset -1px -1px 0 #e3e3e3;box-sizing:border-box;"></div>
<div style="top:264px;font-size:11px;line-height:13px;color:#000;white-space:nowrap;letter-spacing:-0.15px;left:639px;width:163px;overflow:hidden;">NONE</div>
<div style="left:804px;top:262px;width:16px;height:15px;background:#f0f0f0;border:1px solid;border-color:#fff #696969 #696969 #fff;box-shadow:inset 1px 1px 0 #e3e3e3,inset -1px -1px 0 #a0a0a0;box-sizing:border-box;"></div>
<svg style="left:808px;top:268px" width="8" height="4"><path d="M0 0 H8 L4.0 4 Z" fill="#000"/></svg>
<div style="top:288px;font-size:11px;line-height:13px;color:#000;white-space:nowrap;letter-spacing:-0.15px;left:219px;width:400px;text-align:right;">Casting Light</div>
<div style="left:632px;top:286px;width:190px;height:19px;background:#fff;border:1px solid;border-color:#a0a0a0 #fff #fff #a0a0a0;box-shadow:inset 1px 1px 0 #696969,inset -1px -1px 0 #e3e3e3;box-sizing:border-box;"></div>
<div style="top:290px;font-size:11px;line-height:13px;color:#000;white-space:nowrap;letter-spacing:-0.15px;left:636px;width:166px;overflow:hidden;">MagicLightLightSpell01</div>
<div style="left:804px;top:288px;width:16px;height:15px;background:#f0f0f0;border:1px solid;border-color:#fff #696969 #696969 #fff;box-shadow:inset 1px 1px 0 #e3e3e3,inset -1px -1px 0 #a0a0a0;box-sizing:border-box;"></div>
<svg style="left:808px;top:294px" width="8" height="4"><path d="M0 0 H8 L4.0 4 Z" fill="#000"/></svg>
<div style="top:314px;font-size:11px;line-height:13px;color:#000;white-space:nowrap;letter-spacing:-0.15px;left:219px;width:400px;text-align:right;">Hit Effect Art</div>
<div style="left:632px;top:312px;width:190px;height:19px;background:#fff;border:1px solid;border-color:#a0a0a0 #fff #fff #a0a0a0;box-shadow:inset 1px 1px 0 #696969,inset -1px -1px 0 #e3e3e3;box-sizing:border-box;"></div>
<div style="top:316px;font-size:11px;line-height:13px;color:#000;white-space:nowrap;letter-spacing:-0.15px;left:639px;width:163px;overflow:hidden;">NONE</div>
<div style="left:804px;top:314px;width:16px;height:15px;background:#f0f0f0;border:1px solid;border-color:#fff #696969 #696969 #fff;box-shadow:inset 1px 1px 0 #e3e3e3,inset -1px -1px 0 #a0a0a0;box-sizing:border-box;"></div>
<svg style="left:808px;top:320px" width="8" height="4"><path d="M0 0 H8 L4.0 4 Z" fill="#000"/></svg>
<div style="top:340px;font-size:11px;line-height:13px;color:#000;white-space:nowrap;letter-spacing:-0.15px;left:219px;width:400px;text-align:right;">Hit Shader</div>
<div style="left:632px;top:338px;width:190px;height:19px;background:#fff;border:1px solid;border-color:#a0a0a0 #fff #fff #a0a0a0;box-shadow:inset 1px 1px 0 #696969,inset -1px -1px 0 #e3e3e3;box-sizing:border-box;"></div>
<div style="top:342px;font-size:11px;line-height:13px;color:#000;white-space:nowrap;letter-spacing:-0.15px;left:639px;width:163px;overflow:hidden;">NONE</div>
<div style="left:804px;top:340px;width:16px;height:15px;background:#f0f0f0;border:1px solid;border-color:#fff #696969 #696969 #fff;box-shadow:inset 1px 1px 0 #e3e3e3,inset -1px -1px 0 #a0a0a0;box-sizing:border-box;"></div>
<svg style="left:808px;top:346px" width="8" height="4"><path d="M0 0 H8 L4.0 4 Z" fill="#000"/></svg>
<div style="top:366px;font-size:11px;line-height:13px;color:#000;white-space:nowrap;letter-spacing:-0.15px;left:219px;width:400px;text-align:right;">Enchant Art</div>
<div style="left:632px;top:364px;width:190px;height:19px;background:#fff;border:1px solid;border-color:#a0a0a0 #fff #fff #a0a0a0;box-shadow:inset 1px 1px 0 #696969,inset -1px -1px 0 #e3e3e3;box-sizing:border-box;"></div>
<div style="top:368px;font-size:11px;line-height:13px;color:#000;white-space:nowrap;letter-spacing:-0.15px;left:636px;width:166px;overflow:hidden;">EnchElementalFuryFX</div>
<div style="left:804px;top:366px;width:16px;height:15px;background:#f0f0f0;border:1px solid;border-color:#fff #696969 #696969 #fff;box-shadow:inset 1px 1px 0 #e3e3e3,inset -1px -1px 0 #a0a0a0;box-sizing:border-box;"></div>
<svg style="left:808px;top:372px" width="8" height="4"><path d="M0 0 H8 L4.0 4 Z" fill="#000"/></svg>
<div style="top:392px;font-size:11px;line-height:13px;color:#000;white-space:nowrap;letter-spacing:-0.15px;left:219px;width:400px;text-align:right;">Enchant Shader</div>
<div style="left:632px;top:390px;width:190px;height:19px;background:#fff;border:1px solid;border-color:#a0a0a0 #fff #fff #a0a0a0;box-shadow:inset 1px 1px 0 #696969,inset -1px -1px 0 #e3e3e3;box-sizing:border-box;"></div>
<div style="top:394px;font-size:11px;line-height:13px;color:#000;white-space:nowrap;letter-spacing:-0.15px;left:636px;width:166px;overflow:hidden;">EnchElementalFuryFXS</div>
<div style="left:804px;top:392px;width:16px;height:15px;background:#f0f0f0;border:1px solid;border-color:#fff #696969 #696969 #fff;box-shadow:inset 1px 1px 0 #e3e3e3,inset -1px -1px 0 #a0a0a0;box-sizing:border-box;"></div>
<svg style="left:808px;top:398px" width="8" height="4"><path d="M0 0 H8 L4.0 4 Z" fill="#000"/></svg>
<div style="top:418px;font-size:11px;line-height:13px;color:#000;white-space:nowrap;letter-spacing:-0.15px;left:219px;width:400px;text-align:right;">Projectile</div>
<div style="left:632px;top:416px;width:190px;height:19px;background:#fff;border:1px solid;border-color:#a0a0a0 #fff #fff #a0a0a0;box-shadow:inset 1px 1px 0 #696969,inset -1px -1px 0 #e3e3e3;box-sizing:border-box;"></div>
<div style="top:420px;font-size:11px;line-height:13px;color:#000;white-space:nowrap;letter-spacing:-0.15px;left:639px;width:163px;overflow:hidden;">NONE</div>
<div style="left:804px;top:418px;width:16px;height:15px;background:#f0f0f0;border:1px solid;border-color:#fff #696969 #696969 #fff;box-shadow:inset 1px 1px 0 #e3e3e3,inset -1px -1px 0 #a0a0a0;box-sizing:border-box;"></div>
<svg style="left:808px;top:424px" width="8" height="4"><path d="M0 0 H8 L4.0 4 Z" fill="#000"/></svg>
<div style="top:444px;font-size:11px;line-height:13px;color:#000;white-space:nowrap;letter-spacing:-0.15px;left:219px;width:400px;text-align:right;">Impact Data Set</div>
<div style="left:632px;top:442px;width:190px;height:19px;background:#fff;border:1px solid;border-color:#a0a0a0 #fff #fff #a0a0a0;box-shadow:inset 1px 1px 0 #696969,inset -1px -1px 0 #e3e3e3;box-sizing:border-box;"></div>
<div style="top:446px;font-size:11px;line-height:13px;color:#000;white-space:nowrap;letter-spacing:-0.15px;left:636px;width:166px;overflow:hidden;">MAGFirebolt01ImpactSet</div>
<div style="left:804px;top:444px;width:16px;height:15px;background:#f0f0f0;border:1px solid;border-color:#fff #696969 #696969 #fff;box-shadow:inset 1px 1px 0 #e3e3e3,inset -1px -1px 0 #a0a0a0;box-sizing:border-box;"></div>
<svg style="left:808px;top:450px" width="8" height="4"><path d="M0 0 H8 L4.0 4 Z" fill="#000"/></svg>
<div style="top:470px;font-size:11px;line-height:13px;color:#000;white-space:nowrap;letter-spacing:-0.15px;left:219px;width:400px;text-align:right;">Explosion</div>
<div style="left:632px;top:468px;width:190px;height:19px;background:#fff;border:1px solid;border-color:#a0a0a0 #fff #fff #a0a0a0;box-shadow:inset 1px 1px 0 #696969,inset -1px -1px 0 #e3e3e3;box-sizing:border-box;"></div>
<div style="top:472px;font-size:11px;line-height:13px;color:#000;white-space:nowrap;letter-spacing:-0.15px;left:639px;width:163px;overflow:hidden;">NONE</div>
<div style="left:804px;top:470px;width:16px;height:15px;background:#f0f0f0;border:1px solid;border-color:#fff #696969 #696969 #fff;box-shadow:inset 1px 1px 0 #e3e3e3,inset -1px -1px 0 #a0a0a0;box-sizing:border-box;"></div>
<svg style="left:808px;top:476px" width="8" height="4"><path d="M0 0 H8 L4.0 4 Z" fill="#000"/></svg>
<div style="top:496px;font-size:11px;line-height:13px;color:#000;white-space:nowrap;letter-spacing:-0.15px;left:219px;width:400px;text-align:right;">Image Space Mod</div>
<div style="left:632px;top:494px;width:190px;height:19px;background:#fff;border:1px solid;border-color:#a0a0a0 #fff #fff #a0a0a0;box-shadow:inset 1px 1px 0 #696969,inset -1px -1px 0 #e3e3e3;box-sizing:border-box;"></div>
<div style="top:498px;font-size:11px;line-height:13px;color:#000;white-space:nowrap;letter-spacing:-0.15px;left:636px;width:166px;overflow:hidden;">MAGShoutSprint03</div>
<div style="left:804px;top:496px;width:16px;height:15px;background:#f0f0f0;border:1px solid;border-color:#fff #696969 #696969 #fff;box-shadow:inset 1px 1px 0 #e3e3e3,inset -1px -1px 0 #a0a0a0;box-sizing:border-box;"></div>
<svg style="left:808px;top:502px" width="8" height="4"><path d="M0 0 H8 L4.0 4 Z" fill="#000"/></svg>
<div style="left:521px;top:528px;width:319px;height:63px;border:1px solid #a0a0a0;box-shadow:1px 1px 0 #fff, inset 1px 1px 0 #fff;box-sizing:border-box;"></div>
<div style="left:528px;top:522px;height:13px;line-height:13px;font-size:11px;padding:0 1px;background:#f0f0f0;white-space:nowrap;">Dual Casting</div>
<div style="top:543px;font-size:11px;line-height:13px;color:#000;white-space:nowrap;letter-spacing:-0.15px;left:219px;width:400px;text-align:right;">Art</div>
<div style="left:632px;top:540px;width:190px;height:19px;background:#fff;border:1px solid;border-color:#a0a0a0 #fff #fff #a0a0a0;box-shadow:inset 1px 1px 0 #696969,inset -1px -1px 0 #e3e3e3;box-sizing:border-box;"></div>
<div style="top:544px;font-size:11px;line-height:13px;color:#000;white-space:nowrap;letter-spacing:-0.15px;left:639px;width:163px;overflow:hidden;">NONE</div>
<div style="left:804px;top:542px;width:16px;height:15px;background:#f0f0f0;border:1px solid;border-color:#fff #696969 #696969 #fff;box-shadow:inset 1px 1px 0 #e3e3e3,inset -1px -1px 0 #a0a0a0;box-sizing:border-box;"></div>
<svg style="left:808px;top:548px" width="8" height="4"><path d="M0 0 H8 L4.0 4 Z" fill="#000"/></svg>
<div style="top:568px;font-size:11px;line-height:13px;color:#000;white-space:nowrap;letter-spacing:-0.15px;left:219px;width:400px;text-align:right;">Scale</div>
<div style="left:632px;top:565px;width:70px;height:19px;background:#fff;border:1px solid;border-color:#a0a0a0 #fff #fff #a0a0a0;box-shadow:inset 1px 1px 0 #696969,inset -1px -1px 0 #e3e3e3;box-sizing:border-box;"></div>
<div style="top:568px;font-size:11px;line-height:13px;color:#000;white-space:nowrap;letter-spacing:-0.15px;left:635px;width:65px;overflow:hidden;">1.0000</div>
<div style="left:521px;top:601px;width:319px;height:60px;border:1px solid #a0a0a0;box-shadow:1px 1px 0 #fff, inset 1px 1px 0 #fff;box-sizing:border-box;"></div>
<div style="left:528px;top:595px;height:13px;line-height:13px;font-size:11px;padding:0 1px;background:#f0f0f0;white-space:nowrap;">Spellmaking</div>
<div style="top:614px;font-size:11px;line-height:13px;color:#000;white-space:nowrap;letter-spacing:-0.15px;left:553px;">Power Affects</div>
<div style="left:632px;top:615px;width:13px;height:13px;background:#fff;border:1px solid;border-color:#a0a0a0 #fff #fff #a0a0a0;box-shadow:inset 1px 1px 0 #696969,inset -1px -1px 0 #e3e3e3;box-sizing:border-box;background:#fff;"></div>
<svg style="left:632px;top:615px" width="13" height="13"><path d="M3 5.5 L5 7.5 L10 2.5 L10 4.5 L5 9.5 L3 7.5Z" fill="#000"/><path d="M3 5 L5 7 L10 2 M3 6 L5 8 L10 3 M3 7 L5 9 L10 4" stroke="#000" stroke-width="1" fill="none"/></svg>
<div style="top:615px;font-size:11px;line-height:13px;color:#000;white-space:nowrap;letter-spacing:-0.15px;left:651px;width:48px;overflow:hidden;">Magnitude</div>
<div style="left:715px;top:615px;width:13px;height:13px;background:#fff;border:1px solid;border-color:#a0a0a0 #fff #fff #a0a0a0;box-shadow:inset 1px 1px 0 #696969,inset -1px -1px 0 #e3e3e3;box-sizing:border-box;background:#fff;"></div>
<div style="top:615px;font-size:11px;line-height:13px;color:#000;white-space:nowrap;letter-spacing:-0.15px;left:734px;">Duration</div>
<div style="top:639px;font-size:11px;line-height:13px;color:#000;white-space:nowrap;letter-spacing:-0.15px;left:553px;">Area</div>
<div style="left:586px;top:635px;width:71px;height:18px;background:#fff;border:1px solid;border-color:#a0a0a0 #fff #fff #a0a0a0;box-shadow:inset 1px 1px 0 #696969,inset -1px -1px 0 #e3e3e3;box-sizing:border-box;"></div>
<div style="top:638px;font-size:11px;line-height:13px;color:#000;white-space:nowrap;letter-spacing:-0.15px;left:589px;width:66px;overflow:hidden;">0</div>
<div style="top:639px;font-size:11px;line-height:13px;color:#000;white-space:nowrap;letter-spacing:-0.15px;left:325px;width:400px;text-align:right;">Casting Time</div>
<div style="left:730px;top:635px;width:70px;height:18px;background:#fff;border:1px solid;border-color:#a0a0a0 #fff #fff #a0a0a0;box-shadow:inset 1px 1px 0 #696969,inset -1px -1px 0 #e3e3e3;box-sizing:border-box;"></div>
<div style="top:638px;font-size:11px;line-height:13px;color:#000;white-space:nowrap;letter-spacing:-0.15px;left:733px;width:65px;overflow:hidden;">0.5000</div>
<div style="left:521px;top:670px;width:319px;height:43px;border:1px solid #a0a0a0;box-shadow:1px 1px 0 #fff, inset 1px 1px 0 #fff;box-sizing:border-box;"></div>
<div style="left:528px;top:664px;height:13px;line-height:13px;font-size:11px;padding:0 1px;background:#f0f0f0;white-space:nowrap;">Script Effect AI Data</div>
<div style="top:686px;font-size:11px;line-height:13px;color:#000;white-space:nowrap;letter-spacing:-0.15px;left:175px;width:400px;text-align:right;">Score</div>
<div style="left:587px;top:683px;width:70px;height:18px;background:#fff;border:1px solid;border-color:#a0a0a0 #fff #fff #a0a0a0;box-shadow:inset 1px 1px 0 #696969,inset -1px -1px 0 #e3e3e3;box-sizing:border-box;"></div>
<div style="top:686px;font-size:11px;line-height:13px;color:#000;white-space:nowrap;letter-spacing:-0.15px;left:590px;width:65px;overflow:hidden;">0.0000</div>
<div style="top:686px;font-size:11px;line-height:13px;color:#000;white-space:nowrap;letter-spacing:-0.15px;left:325px;width:400px;text-align:right;">Delay Time</div>
<div style="left:731px;top:683px;width:70px;height:18px;background:#fff;border:1px solid;border-color:#a0a0a0 #fff #fff #a0a0a0;box-shadow:inset 1px 1px 0 #696969,inset -1px -1px 0 #e3e3e3;box-sizing:border-box;"></div>
<div style="top:686px;font-size:11px;line-height:13px;color:#000;white-space:nowrap;letter-spacing:-0.15px;left:734px;width:65px;overflow:hidden;">0.0000</div>
<div style="top:720px;font-size:11px;line-height:13px;color:#000;white-space:nowrap;letter-spacing:-0.15px;left:220px;width:400px;text-align:right;">Equip Ability</div>
<div style="left:632px;top:716px;width:190px;height:20px;background:#fff;border:1px solid;border-color:#a0a0a0 #fff #fff #a0a0a0;box-shadow:inset 1px 1px 0 #696969,inset -1px -1px 0 #e3e3e3;box-sizing:border-box;"></div>
<div style="top:720px;font-size:11px;line-height:13px;color:#000;white-space:nowrap;letter-spacing:-0.15px;left:639px;width:163px;overflow:hidden;">NONE</div>
<div style="left:804px;top:718px;width:16px;height:16px;background:#f0f0f0;border:1px solid;border-color:#fff #696969 #696969 #fff;box-shadow:inset 1px 1px 0 #e3e3e3,inset -1px -1px 0 #a0a0a0;box-sizing:border-box;"></div>
<svg style="left:808px;top:724px" width="8" height="4"><path d="M0 0 H8 L4.0 4 Z" fill="#000"/></svg>
<div style="left:600px;top:742px;width:73px;height:25px;border:1px solid #000;box-sizing:border-box;"></div>
<div style="left:601px;top:743px;width:71px;height:23px;background:#f0f0f0;border:1px solid;border-color:#fff #696969 #696969 #fff;box-shadow:inset 1px 1px 0 #e3e3e3,inset -1px -1px 0 #a0a0a0;box-sizing:border-box;"></div>
<div style="top:748px;font-size:11px;line-height:13px;color:#000;white-space:nowrap;letter-spacing:-0.15px;left:436.5px;width:400px;text-align:center;">OK</div>
<div style="left:696px;top:743px;width:70px;height:23px;background:#f0f0f0;border:1px solid;border-color:#fff #696969 #696969 #fff;box-shadow:inset 1px 1px 0 #e3e3e3,inset -1px -1px 0 #a0a0a0;box-sizing:border-box;"></div>
<div style="top:748px;font-size:11px;line-height:13px;color:#000;white-space:nowrap;letter-spacing:-0.15px;left:531.0px;width:400px;text-align:center;">Cancel</div>
<div style="left:850px;top:219px;width:320px;height:202px;border:1px solid #a0a0a0;box-shadow:1px 1px 0 #fff, inset 1px 1px 0 #fff;box-sizing:border-box;"></div>
<div style="left:857px;top:213px;height:13px;line-height:13px;font-size:11px;padding:0 1px;background:#f0f0f0;white-space:nowrap;">Sounds</div>
<div style="top:228px;font-size:11px;line-height:13px;color:#000;white-space:nowrap;letter-spacing:-0.15px;left:552px;width:400px;text-align:right;">Draw/Sheathe</div>
<div style="left:962px;top:226px;width:189px;height:19px;background:#fff;border:1px solid;border-color:#a0a0a0 #fff #fff #a0a0a0;box-shadow:inset 1px 1px 0 #696969,inset -1px -1px 0 #e3e3e3;box-sizing:border-box;"></div>
<div style="top:230px;font-size:11px;line-height:13px;color:#000;white-space:nowrap;letter-spacing:-0.15px;left:969px;width:162px;overflow:hidden;">NONE</div>
<div style="left:1133px;top:228px;width:16px;height:15px;background:#f0f0f0;border:1px solid;border-color:#fff #696969 #696969 #fff;box-shadow:inset 1px 1px 0 #e3e3e3,inset -1px -1px 0 #a0a0a0;box-sizing:border-box;"></div>
<svg style="left:1137px;top:234px" width="8" height="4"><path d="M0 0 H8 L4.0 4 Z" fill="#000"/></svg>
<div style="top:254px;font-size:11px;line-height:13px;color:#000;white-space:nowrap;letter-spacing:-0.15px;left:552px;width:400px;text-align:right;">Charge</div>
<div style="left:962px;top:252px;width:189px;height:19px;background:#fff;border:1px solid;border-color:#a0a0a0 #fff #fff #a0a0a0;box-shadow:inset 1px 1px 0 #696969,inset -1px -1px 0 #e3e3e3;box-sizing:border-box;"></div>
<div style="top:256px;font-size:11px;line-height:13px;color:#000;white-space:nowrap;letter-spacing:-0.15px;left:969px;width:162px;overflow:hidden;">NONE</div>
<div style="left:1133px;top:254px;width:16px;height:15px;background:#f0f0f0;border:1px solid;border-color:#fff #696969 #696969 #fff;box-shadow:inset 1px 1px 0 #e3e3e3,inset -1px -1px 0 #a0a0a0;box-sizing:border-box;"></div>
<svg style="left:1137px;top:260px" width="8" height="4"><path d="M0 0 H8 L4.0 4 Z" fill="#000"/></svg>
<div style="top:280px;font-size:11px;line-height:13px;color:#000;white-space:nowrap;letter-spacing:-0.15px;left:552px;width:400px;text-align:right;">Ready</div>
<div style="left:962px;top:278px;width:189px;height:19px;background:#fff;border:1px solid;border-color:#a0a0a0 #fff #fff #a0a0a0;box-shadow:inset 1px 1px 0 #696969,inset -1px -1px 0 #e3e3e3;box-sizing:border-box;"></div>
<div style="top:282px;font-size:11px;line-height:13px;color:#000;white-space:nowrap;letter-spacing:-0.15px;left:969px;width:162px;overflow:hidden;">NONE</div>
<div style="left:1133px;top:280px;width:16px;height:15px;background:#f0f0f0;border:1px solid;border-color:#fff #696969 #696969 #fff;box-shadow:inset 1px 1px 0 #e3e3e3,inset -1px -1px 0 #a0a0a0;box-sizing:border-box;"></div>
<svg style="left:1137px;top:286px" width="8" height="4"><path d="M0 0 H8 L4.0 4 Z" fill="#000"/></svg>
<div style="top:306px;font-size:11px;line-height:13px;color:#000;white-space:nowrap;letter-spacing:-0.15px;left:552px;width:400px;text-align:right;">Release</div>
<div style="left:962px;top:304px;width:189px;height:19px;background:#fff;border:1px solid;border-color:#a0a0a0 #fff #fff #a0a0a0;box-shadow:inset 1px 1px 0 #696969,inset -1px -1px 0 #e3e3e3;box-sizing:border-box;"></div>
<div style="top:308px;font-size:11px;line-height:13px;color:#000;white-space:nowrap;letter-spacing:-0.15px;left:965px;width:166px;overflow:hidden;">VOCShoutFXElementalFuryOn</div>
<div style="left:1133px;top:306px;width:16px;height:15px;background:#f0f0f0;border:1px solid;border-color:#fff #696969 #696969 #fff;box-shadow:inset 1px 1px 0 #e3e3e3,inset -1px -1px 0 #a0a0a0;box-sizing:border-box;"></div>
<svg style="left:1137px;top:312px" width="8" height="4"><path d="M0 0 H8 L4.0 4 Z" fill="#000"/></svg>
<div style="top:332px;font-size:11px;line-height:13px;color:#000;white-space:nowrap;letter-spacing:-0.15px;left:552px;width:400px;text-align:right;">Cast Loop (Conc.)</div>
<div style="left:962px;top:330px;width:189px;height:19px;background:#fff;border:1px solid;border-color:#a0a0a0 #fff #fff #a0a0a0;box-shadow:inset 1px 1px 0 #696969,inset -1px -1px 0 #e3e3e3;box-sizing:border-box;"></div>
<div style="top:334px;font-size:11px;line-height:13px;color:#000;white-space:nowrap;letter-spacing:-0.15px;left:969px;width:162px;overflow:hidden;">NONE</div>
<div style="left:1133px;top:332px;width:16px;height:15px;background:#f0f0f0;border:1px solid;border-color:#fff #696969 #696969 #fff;box-shadow:inset 1px 1px 0 #e3e3e3,inset -1px -1px 0 #a0a0a0;box-sizing:border-box;"></div>
<svg style="left:1137px;top:338px" width="8" height="4"><path d="M0 0 H8 L4.0 4 Z" fill="#000"/></svg>
<div style="top:358px;font-size:11px;line-height:13px;color:#000;white-space:nowrap;letter-spacing:-0.15px;left:552px;width:400px;text-align:right;">On Hit</div>
<div style="left:962px;top:356px;width:189px;height:19px;background:#fff;border:1px solid;border-color:#a0a0a0 #fff #fff #a0a0a0;box-shadow:inset 1px 1px 0 #696969,inset -1px -1px 0 #e3e3e3;box-sizing:border-box;"></div>
<div style="top:360px;font-size:11px;line-height:13px;color:#000;white-space:nowrap;letter-spacing:-0.15px;left:965px;width:166px;overflow:hidden;">VOCShoutFXUnrelentingForceThunder</div>
<div style="left:1133px;top:358px;width:16px;height:15px;background:#f0f0f0;border:1px solid;border-color:#fff #696969 #696969 #fff;box-shadow:inset 1px 1px 0 #e3e3e3,inset -1px -1px 0 #a0a0a0;box-sizing:border-box;"></div>
<svg style="left:1137px;top:364px" width="8" height="4"><path d="M0 0 H8 L4.0 4 Z" fill="#000"/></svg>
<div style="top:384px;font-size:11px;line-height:13px;color:#000;white-space:nowrap;letter-spacing:-0.15px;left:552px;width:400px;text-align:right;">Casting Sound Level</div>
<div style="left:962px;top:382px;width:189px;height:19px;background:#fff;border:1px solid;border-color:#a0a0a0 #fff #fff #a0a0a0;box-shadow:inset 1px 1px 0 #696969,inset -1px -1px 0 #e3e3e3;box-sizing:border-box;"></div>
<div style="top:386px;font-size:11px;line-height:13px;color:#000;white-space:nowrap;letter-spacing:-0.15px;left:965px;width:166px;overflow:hidden;">Very Loud</div>
<div style="left:1133px;top:384px;width:16px;height:15px;background:#f0f0f0;border:1px solid;border-color:#fff #696969 #696969 #fff;box-shadow:inset 1px 1px 0 #e3e3e3,inset -1px -1px 0 #a0a0a0;box-sizing:border-box;"></div>
<svg style="left:1137px;top:390px" width="8" height="4"><path d="M0 0 H8 L4.0 4 Z" fill="#000"/></svg>
<div style="top:431px;font-size:11px;line-height:13px;color:#000;white-space:nowrap;letter-spacing:-0.15px;left:850px;">Magic item description</div>
<div style="left:850px;top:449px;width:320px;height:97px;background:#fff;border:1px solid;border-color:#a0a0a0 #fff #fff #a0a0a0;box-shadow:inset 1px 1px 0 #696969,inset -1px -1px 0 #e3e3e3;box-sizing:border-box;"></div>
<div style="left:1153px;top:451px;width:15px;height:93px;background:linear-gradient(90deg,#e9e9e9,#f5f5f5 50%,#e9e9e9);"></div>
<div style="left:1157px;top:456px;width:0;height:0;border-left:4px solid transparent;border-right:4px solid transparent;border-bottom:4px solid #909090;"></div>
<div style="left:1157px;top:535px;width:0;height:0;border-left:4px solid transparent;border-right:4px solid transparent;border-top:4px solid #909090;"></div>
<div style="top:452px;font-size:11px;line-height:13px;color:#000;white-space:nowrap;left:853px;">Вы быстрее орудуете экипированным оружием в течение</div>
<div style="top:465px;font-size:11px;line-height:13px;color:#000;white-space:nowrap;left:853px;">&lt;dur&gt; с.</div>
<div style="top:556px;font-size:11px;line-height:13px;color:#000;white-space:nowrap;letter-spacing:-0.15px;left:850px;">Papyrus Scripts:</div>
<div style="left:850px;top:574px;width:236px;height:191px;background:#fff;border:1px solid;border-color:#a0a0a0 #fff #fff #a0a0a0;box-shadow:inset 1px 1px 0 #696969,inset -1px -1px 0 #e3e3e3;box-sizing:border-box;"></div>
<div style="left:852px;top:576px;width:232px;height:15px;background:#f0f0f0;border-bottom:1px solid #a0a0a0;box-sizing:border-box;"></div>
<div style="top:578px;font-size:11px;line-height:13px;color:#000;white-space:nowrap;letter-spacing:-0.15px;left:857px;">Script Name</div>
<div style="left:852px;top:749px;width:232px;height:15px;background:linear-gradient(180deg,#e8e8e8,#f4f4f4 50%,#e8e8e8);"></div>
<div style="left:858px;top:752px;width:0;height:0;border-top:4px solid transparent;border-bottom:4px solid transparent;border-right:4px solid #303030;"></div>
<div style="left:1074px;top:752px;width:0;height:0;border-top:4px solid transparent;border-bottom:4px solid transparent;border-left:4px solid #303030;"></div>
<div style="left:870px;top:749px;width:183px;height:15px;background:linear-gradient(180deg,#f6f6f6,#e4e4e4 50%,#d2d2d2);border:1px solid #8e8e8e;border-radius:2px;box-sizing:border-box;"></div>
<div style="left:958px;top:752px;width:1px;height:8px;background:#444;"></div>
<div style="left:960px;top:752px;width:1px;height:8px;background:#444;"></div>
<div style="left:962px;top:752px;width:1px;height:8px;background:#444;"></div>
<div style="left:1096px;top:573px;width:75px;height:23px;background:#f0f0f0;border:1px solid;border-color:#fff #696969 #696969 #fff;box-shadow:inset 1px 1px 0 #e3e3e3,inset -1px -1px 0 #a0a0a0;box-sizing:border-box;"></div>
<div style="top:578px;font-size:11px;line-height:13px;color:#000;white-space:nowrap;font-weight:bold;left:933.5px;width:400px;text-align:center;">Add</div>
<div style="left:1096px;top:602px;width:75px;height:23px;background:#f0f0f0;border:1px solid;border-color:#fff #696969 #696969 #fff;box-shadow:inset 1px 1px 0 #e3e3e3,inset -1px -1px 0 #a0a0a0;box-sizing:border-box;"></div>
<div style="top:607px;font-size:11px;line-height:13px;color:#8c8c8c;white-space:nowrap;letter-spacing:-0.15px;left:933.5px;width:400px;text-align:center;">Remove</div>
<div style="left:1096px;top:631px;width:75px;height:23px;background:#f0f0f0;border:1px solid;border-color:#fff #696969 #696969 #fff;box-shadow:inset 1px 1px 0 #e3e3e3,inset -1px -1px 0 #a0a0a0;box-sizing:border-box;"></div>
<div style="top:636px;font-size:11px;line-height:13px;color:#8c8c8c;white-space:nowrap;letter-spacing:-0.15px;left:933.5px;width:400px;text-align:center;">Properties</div>
</body></html>
